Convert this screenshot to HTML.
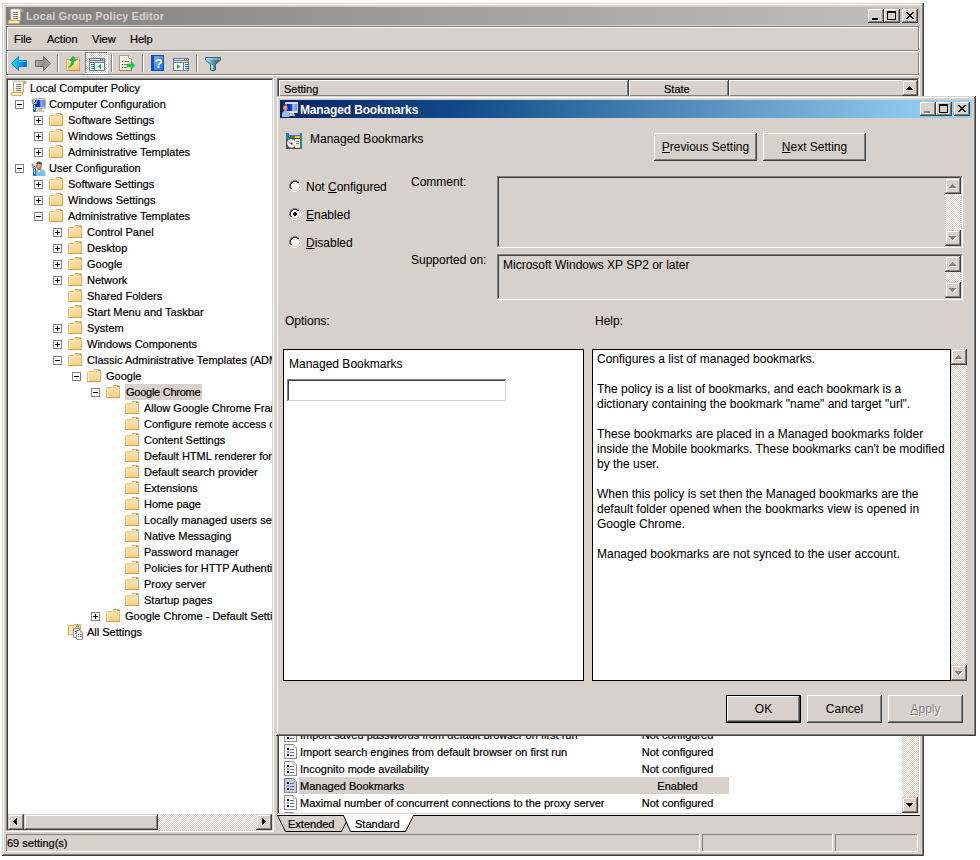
<!DOCTYPE html><html><head><meta charset="utf-8"><style>*{box-sizing:border-box}
html,body{margin:0;padding:0}
body{width:980px;height:860px;overflow:hidden;background:#fff;position:relative;font-family:"Liberation Sans",sans-serif;font-size:11px;color:#000}
.a{position:absolute}
.t{position:absolute;white-space:nowrap;line-height:15px}
.s11{margin-left:-1px;-webkit-text-stroke:0.2px currentColor}
.s12{-webkit-text-stroke:0.05px currentColor}
svg.a{overflow:visible}
u{text-decoration:underline;text-decoration-thickness:1px;text-underline-offset:1px}
</style></head><body><svg width="0" height="0" style="position:absolute"><defs><pattern id="dith" width="2" height="2" patternUnits="userSpaceOnUse"><rect width="2" height="2" fill="#d8d0ca"/><rect width="1" height="1" fill="#fff"/><rect x="1" y="1" width="1" height="1" fill="#fff"/></pattern></defs></svg>
<div class="a" style="left:2px;top:3px;width:922px;height:853px;background:#d8d0ca"></div>
<div class="a" style="left:2px;top:3px;width:922px;height:1px;background:#d8d0ca"></div>
<div class="a" style="left:2px;top:3px;width:1px;height:853px;background:#d8d0ca"></div>
<div class="a" style="left:2px;top:855px;width:922px;height:1px;background:#404040"></div>
<div class="a" style="left:923px;top:3px;width:1px;height:853px;background:#404040"></div>
<div class="a" style="left:3px;top:4px;width:920px;height:1px;background:#fff"></div>
<div class="a" style="left:3px;top:4px;width:1px;height:851px;background:#fff"></div>
<div class="a" style="left:3px;top:854px;width:920px;height:1px;background:#808080"></div>
<div class="a" style="left:922px;top:4px;width:1px;height:851px;background:#808080"></div>
<div class="a" style="left:6px;top:7px;width:914px;height:18px;background:linear-gradient(to right,#808080,#c0c0c0)"></div>
<svg class="a" style="left:8px;top:8px" width="16" height="16" viewBox="0 0 16 16"><defs><linearGradient id="gsc" x1="0" y1="0" x2="1" y2="1"><stop offset="0" stop-color="#fffef4"/><stop offset="1" stop-color="#fbe49a"/></linearGradient></defs><path d="M2.5,2 Q2.5,1 3.5,1 H13.5 L12.5,2.5 V12.5 H2.5 Z" fill="url(#gsc)" stroke="#a8aab8"/><g shape-rendering="crispEdges"><rect x="5" y="4" width="5" height="1" fill="#7c7aa8"/><rect x="5" y="6" width="5" height="1" fill="#7c7aa8"/><rect x="5" y="8" width="5" height="1" fill="#7c7aa8"/><rect x="5" y="10" width="5" height="1" fill="#7c7aa8"/></g><circle cx="14" cy="2.6" r="1.6" fill="#c8a048"/><path d="M1,12.5 H10.5 Q11.5,12.5 11.5,14 Q11.5,15.5 10.5,15.5 H1 Q0,15.5 0,14 Q0,12.5 1,12.5Z" fill="#fbe6a8" stroke="#c8a860" stroke-width="0.9"/><rect x="2" y="13.5" width="7" height="1" fill="#fff6d8"/></svg>
<div class="t " style="left:26px;top:9px;font-size:11px;font-weight:bold;color:#d8d0ca;letter-spacing:0.12px">Local Group Policy Editor</div>
<div class="a" style="left:868px;top:9px;width:16px;height:14px;background:#d8d0ca"></div>
<div class="a" style="left:868px;top:9px;width:16px;height:1px;background:#fff"></div>
<div class="a" style="left:868px;top:9px;width:1px;height:14px;background:#fff"></div>
<div class="a" style="left:868px;top:22px;width:16px;height:1px;background:#404040"></div>
<div class="a" style="left:883px;top:9px;width:1px;height:14px;background:#404040"></div>
<div class="a" style="left:869px;top:21px;width:14px;height:1px;background:#808080"></div>
<div class="a" style="left:882px;top:10px;width:1px;height:12px;background:#808080"></div>
<svg class="a" style="left:0;top:0" width="980" height="860" shape-rendering="crispEdges"><rect x="872" y="18" width="6" height="2" fill="#000"/></svg>
<div class="a" style="left:884px;top:9px;width:16px;height:14px;background:#d8d0ca"></div>
<div class="a" style="left:884px;top:9px;width:16px;height:1px;background:#fff"></div>
<div class="a" style="left:884px;top:9px;width:1px;height:14px;background:#fff"></div>
<div class="a" style="left:884px;top:22px;width:16px;height:1px;background:#404040"></div>
<div class="a" style="left:899px;top:9px;width:1px;height:14px;background:#404040"></div>
<div class="a" style="left:885px;top:21px;width:14px;height:1px;background:#808080"></div>
<div class="a" style="left:898px;top:10px;width:1px;height:12px;background:#808080"></div>
<svg class="a" style="left:0;top:0" width="980" height="860" shape-rendering="crispEdges"><rect x="887" y="11" width="9" height="2" fill="#000"/><rect x="887" y="11" width="1" height="9" fill="#000"/><rect x="895" y="11" width="1" height="9" fill="#000"/><rect x="887" y="19" width="9" height="1" fill="#000"/></svg>
<div class="a" style="left:902px;top:9px;width:16px;height:14px;background:#d8d0ca"></div>
<div class="a" style="left:902px;top:9px;width:16px;height:1px;background:#fff"></div>
<div class="a" style="left:902px;top:9px;width:1px;height:14px;background:#fff"></div>
<div class="a" style="left:902px;top:22px;width:16px;height:1px;background:#404040"></div>
<div class="a" style="left:917px;top:9px;width:1px;height:14px;background:#404040"></div>
<div class="a" style="left:903px;top:21px;width:14px;height:1px;background:#808080"></div>
<div class="a" style="left:916px;top:10px;width:1px;height:12px;background:#808080"></div>
<svg class="a" style="left:0;top:0" width="980" height="860" shape-rendering="crispEdges"><rect x="906" y="12" width="1" height="1" fill="#000"/><rect x="907" y="12" width="1" height="1" fill="#000"/><rect x="912" y="12" width="1" height="1" fill="#000"/><rect x="913" y="12" width="1" height="1" fill="#000"/><rect x="907" y="13" width="1" height="1" fill="#000"/><rect x="908" y="13" width="1" height="1" fill="#000"/><rect x="911" y="13" width="1" height="1" fill="#000"/><rect x="912" y="13" width="1" height="1" fill="#000"/><rect x="908" y="14" width="1" height="1" fill="#000"/><rect x="909" y="14" width="1" height="1" fill="#000"/><rect x="910" y="14" width="1" height="1" fill="#000"/><rect x="911" y="14" width="1" height="1" fill="#000"/><rect x="909" y="15" width="1" height="1" fill="#000"/><rect x="910" y="15" width="1" height="1" fill="#000"/><rect x="908" y="16" width="1" height="1" fill="#000"/><rect x="909" y="16" width="1" height="1" fill="#000"/><rect x="910" y="16" width="1" height="1" fill="#000"/><rect x="911" y="16" width="1" height="1" fill="#000"/><rect x="907" y="17" width="1" height="1" fill="#000"/><rect x="908" y="17" width="1" height="1" fill="#000"/><rect x="911" y="17" width="1" height="1" fill="#000"/><rect x="912" y="17" width="1" height="1" fill="#000"/><rect x="906" y="18" width="1" height="1" fill="#000"/><rect x="907" y="18" width="1" height="1" fill="#000"/><rect x="912" y="18" width="1" height="1" fill="#000"/><rect x="913" y="18" width="1" height="1" fill="#000"/></svg>
<div class="a" style="left:6px;top:26px;width:913px;height:1px;background:#808080"></div>
<div class="a" style="left:6px;top:26px;width:1px;height:49px;background:#808080"></div>
<div class="a" style="left:7px;top:27px;width:913px;height:1px;background:#fff"></div>
<div class="a" style="left:7px;top:27px;width:1px;height:49px;background:#fff"></div>
<div class="a" style="left:918px;top:26px;width:1px;height:49px;background:#808080"></div>
<div class="a" style="left:919px;top:26px;width:1px;height:50px;background:#fff"></div>
<div class="a" style="left:6px;top:50px;width:913px;height:1px;background:#808080"></div>
<div class="a" style="left:7px;top:51px;width:913px;height:1px;background:#fff"></div>
<div class="a" style="left:6px;top:74px;width:913px;height:1px;background:#808080"></div>
<div class="a" style="left:7px;top:75px;width:913px;height:1px;background:#fff"></div>
<div class="t s11" style="left:15px;top:32px;font-size:11px;color:#000;">File</div>
<div class="t s11" style="left:48px;top:32px;font-size:11px;color:#000;">Action</div>
<div class="t s11" style="left:93px;top:32px;font-size:11px;color:#000;">View</div>
<div class="t s11" style="left:131px;top:32px;font-size:11px;color:#000;">Help</div>
<svg class="a" style="left:11px;top:56px" width="17" height="15" viewBox="0 0 17 15"><defs><linearGradient id="gb" x1="0" y1="0" x2="1" y2="0.3"><stop offset="0" stop-color="#30d8ff"/><stop offset="0.5" stop-color="#08b8f0"/><stop offset="1" stop-color="#0068d0"/></linearGradient></defs><path d="M0.5,7.5 L7.5,0.5 V4.5 H15.5 V10.5 H7.5 V14.5 Z" fill="url(#gb)" stroke="#0a8ad0" stroke-linejoin="round"/><path d="M8,5.5 H15" stroke="#40d8ff" stroke-width="1"/></svg>
<svg class="a" style="left:34px;top:56px" width="17" height="15" viewBox="0 0 17 15"><defs><linearGradient id="gf" x1="0" y1="0" x2="1" y2="0.3"><stop offset="0" stop-color="#b8b8b8"/><stop offset="0.6" stop-color="#8c8c8c"/><stop offset="1" stop-color="#a8a8a8"/></linearGradient></defs><path d="M16.5,7.5 L9.5,0.5 V4.5 H1.5 V10.5 H9.5 V14.5 Z" fill="url(#gf)" stroke="#6c6c6c" stroke-linejoin="round"/></svg>
<div class="a" style="left:57px;top:54px;width:1px;height:18px;background:#808080"></div>
<div class="a" style="left:58px;top:54px;width:1px;height:18px;background:#fff"></div>
<svg class="a" style="left:66px;top:56px" width="15" height="15" viewBox="0 0 15 15"><defs><linearGradient id="gfo" x1="0" y1="0" x2="0" y2="1"><stop offset="0" stop-color="#fde8b0"/><stop offset="1" stop-color="#f6c870"/></linearGradient></defs><path d="M0.5,3.5 H7.5 V1.5 H13.5 V14.5 H0.5Z" fill="url(#gfo)" stroke="#e0a858" stroke-linejoin="round"/><path d="M1,6 H13" stroke="#fff0c8"/><rect x="1" y="6" width="1" height="8" fill="#fff4d0"/><rect x="10" y="2.5" width="2" height="1.5" fill="#40a0e8"/><rect x="0" y="14" width="14" height="1" fill="#c89040"/><path d="M2.2,11.5 Q5.5,9 6,4.5 L3.8,4.5 L7,0.3 L10.2,4.5 L8.2,4.5 Q7.8,10 2.2,11.5Z" fill="#10c838" stroke="#089828" stroke-width="0.6"/></svg>
<div class="a" style="left:85px;top:52px;width:23px;height:22px;background:#fff"></div>
<div class="a" style="left:85px;top:52px;width:22px;height:1px;background:#808080"></div>
<div class="a" style="left:85px;top:52px;width:1px;height:21px;background:#808080"></div>
<svg class="a" style="left:86px;top:53px" width="21" height="20"><rect width="21" height="20" fill="url(#dith)"/></svg>
<svg class="a" style="left:89px;top:58px" width="16" height="13" viewBox="0 0 16 13"><g shape-rendering="crispEdges"><rect x="0" y="0" width="16" height="13" fill="#6e7c90"/><rect x="1" y="1" width="14" height="1" fill="#d4deea"/><rect x="11" y="1" width="1" height="1" fill="#6e7c90"/><rect x="13" y="1" width="1" height="1" fill="#6e7c90"/><rect x="1" y="3" width="14" height="1" fill="#d4deea"/><rect x="1" y="5" width="4" height="7" fill="#fff"/><rect x="6" y="5" width="9" height="7" fill="#f6f6f6"/><rect x="2" y="6" width="3" height="1" fill="#1a7ed0"/><rect x="2" y="8" width="3" height="1" fill="#1a7ed0"/><rect x="2" y="10" width="3" height="1" fill="#1a7ed0"/></g><path d="M12,6 L8.5,8.5 L12,11Z" fill="#10c030"/></svg>
<div class="a" style="left:111px;top:54px;width:1px;height:18px;background:#808080"></div>
<div class="a" style="left:112px;top:54px;width:1px;height:18px;background:#fff"></div>
<svg class="a" style="left:119px;top:55px" width="17" height="16" viewBox="0 0 17 16"><defs><linearGradient id="gpg" x1="0" y1="0" x2="0" y2="1"><stop offset="0" stop-color="#fffdf0"/><stop offset="1" stop-color="#fff0c0"/></linearGradient></defs><path d="M0.5,0.5 H9.5 L12.5,3.5 V15.5 H0.5Z" fill="url(#gpg)" stroke="#a0a0a0"/><path d="M9.5,0.5 V3.5 H12.5" fill="#fff" stroke="#a8a8a8"/><rect x="0" y="15" width="13" height="1" fill="#808080"/><g shape-rendering="crispEdges"><rect x="3" y="6" width="1" height="1" fill="#222"/><rect x="5" y="6" width="5" height="1" fill="#7a78a8"/><rect x="3" y="9" width="1" height="1" fill="#222"/><rect x="5" y="9" width="3" height="1" fill="#7a78a8"/><rect x="3" y="12" width="1" height="1" fill="#222"/><rect x="5" y="12" width="3" height="1" fill="#7a78a8"/></g><path d="M8,9 H12 V6.5 L16,10.5 L12,14.5 V12 H8Z" fill="#18d048" stroke="#10b030" stroke-width="0.5"/></svg>
<div class="a" style="left:142px;top:54px;width:1px;height:18px;background:#808080"></div>
<div class="a" style="left:143px;top:54px;width:1px;height:18px;background:#fff"></div>
<svg class="a" style="left:151px;top:55px" width="13" height="16" viewBox="0 0 13 16"><defs><linearGradient id="ghp" x1="0" y1="0" x2="1" y2="1"><stop offset="0" stop-color="#80a8f0"/><stop offset="1" stop-color="#1870e0"/></linearGradient></defs><rect x="0" y="0" width="13" height="16" fill="#0a50c0"/><rect x="0" y="0" width="3" height="16" fill="#1850a8"/><rect x="3" y="1" width="9" height="14" fill="url(#ghp)"/><text x="7.6" y="13.2" font-family="Liberation Sans" font-weight="bold" font-size="13.5" fill="#fff" text-anchor="middle">?</text></svg>
<svg class="a" style="left:173px;top:58px" width="16" height="13" viewBox="0 0 16 13"><g shape-rendering="crispEdges"><rect x="0" y="0" width="16" height="13" fill="#6e7c90"/><rect x="1" y="1" width="14" height="1" fill="#d4deea"/><rect x="11" y="1" width="1" height="1" fill="#6e7c90"/><rect x="13" y="1" width="1" height="1" fill="#6e7c90"/><rect x="1" y="3" width="14" height="1" fill="#d4deea"/><rect x="1" y="5" width="9" height="7" fill="#f6f6f6"/><rect x="11" y="5" width="4" height="7" fill="#fff"/><rect x="12" y="6" width="3" height="1" fill="#1a7ed0"/><rect x="12" y="8" width="3" height="1" fill="#1a7ed0"/><rect x="12" y="10" width="3" height="1" fill="#1a7ed0"/></g><path d="M4,6 L7.5,8.5 L4,11Z" fill="#10c030"/></svg>
<div class="a" style="left:196px;top:54px;width:1px;height:18px;background:#808080"></div>
<div class="a" style="left:197px;top:54px;width:1px;height:18px;background:#fff"></div>
<svg class="a" style="left:205px;top:57px" width="16" height="14" viewBox="0 0 16 14"><defs><linearGradient id="gfl" x1="0" y1="0" x2="1" y2="0"><stop offset="0" stop-color="#b8e8f8"/><stop offset="0.5" stop-color="#5a8ea8"/><stop offset="1" stop-color="#2a5a70"/></linearGradient></defs><path d="M0.5,0.5 H15.5 V3 L10.5,7.5 V13 Q7.5,14.5 5.5,13 V7.5 L0.5,3Z" fill="url(#gfl)" stroke="#3a6a80" stroke-linejoin="round"/><rect x="1" y="1.5" width="14" height="1" fill="#a8e4fa"/><rect x="6.5" y="8" width="1.5" height="5" fill="#d8f4ff"/></svg>
<div class="a" style="left:6px;top:78px;width:268px;height:754px;background:#fff"></div>
<div class="a" style="left:6px;top:78px;width:268px;height:1px;background:#808080"></div>
<div class="a" style="left:6px;top:78px;width:1px;height:754px;background:#808080"></div>
<div class="a" style="left:6px;top:831px;width:268px;height:1px;background:#fff"></div>
<div class="a" style="left:273px;top:78px;width:1px;height:754px;background:#fff"></div>
<div class="a" style="left:7px;top:79px;width:266px;height:1px;background:#404040"></div>
<div class="a" style="left:7px;top:79px;width:1px;height:752px;background:#404040"></div>
<div class="a" style="left:7px;top:830px;width:266px;height:1px;background:#d8d0ca"></div>
<div class="a" style="left:272px;top:79px;width:1px;height:752px;background:#d8d0ca"></div>
<div class="a" style="left:274px;top:76px;width:3px;height:758px;background:#d8d0ca"></div>
<div class="a" style="left:8px;top:80px;width:264px;height:734px;overflow:hidden">
<svg class="a" style="left:3px;top:0px" width="16" height="16" viewBox="0 0 16 16"><defs><linearGradient id="gsc" x1="0" y1="0" x2="1" y2="1"><stop offset="0" stop-color="#fffef4"/><stop offset="1" stop-color="#fbe49a"/></linearGradient></defs><path d="M2.5,2 Q2.5,1 3.5,1 H13.5 L12.5,2.5 V12.5 H2.5 Z" fill="url(#gsc)" stroke="#a8aab8"/><g shape-rendering="crispEdges"><rect x="5" y="4" width="5" height="1" fill="#7c7aa8"/><rect x="5" y="6" width="5" height="1" fill="#7c7aa8"/><rect x="5" y="8" width="5" height="1" fill="#7c7aa8"/><rect x="5" y="10" width="5" height="1" fill="#7c7aa8"/></g><circle cx="14" cy="2.6" r="1.6" fill="#c8a048"/><path d="M1,12.5 H10.5 Q11.5,12.5 11.5,14 Q11.5,15.5 10.5,15.5 H1 Q0,15.5 0,14 Q0,12.5 1,12.5Z" fill="#fbe6a8" stroke="#c8a860" stroke-width="0.9"/><rect x="2" y="13.5" width="7" height="1" fill="#fff6d8"/></svg>
<div class="t s11" style="left:23px;top:1px;font-size:11px;color:#000;">Local Computer Policy</div>
<svg class="a" style="left:7px;top:20px" width="9" height="9" viewBox="0 0 9 9"><rect x="0.5" y="0.5" width="8" height="8" fill="#fff" stroke="#808080"/><rect x="2" y="4" width="5" height="1" fill="#000"/></svg>
<svg class="a" style="left:22px;top:16px" width="16" height="16" viewBox="0 0 16 16"><defs><linearGradient id="scr" x1="0" y1="0" x2="1" y2="0"><stop offset="0" stop-color="#0010b8"/><stop offset="0.45" stop-color="#0838e0"/><stop offset="0.6" stop-color="#90b8f8"/><stop offset="1" stop-color="#5080f0"/></linearGradient></defs><rect x="3" y="2" width="13" height="11" rx="1" fill="#d6d2c2"/><rect x="3.5" y="2.5" width="12" height="10" rx="1" fill="none" stroke="#bcb8aa"/><rect x="5" y="4" width="10" height="7" fill="url(#scr)"/><rect x="8" y="13" width="4" height="1" fill="#b8b4a8"/><rect x="6" y="14" width="8" height="2" fill="#c8c4b8"/><path d="M2.5,6 V3.5 M6.5,6 V3.5" stroke="#8a8a8a" stroke-width="1.6"/><rect x="2" y="6" width="5" height="2" fill="#9a9a9a"/><rect x="4" y="6" width="1" height="1" fill="#555"/><rect x="4" y="7" width="1" height="1" fill="#fff"/><rect x="3" y="8" width="3" height="8" rx="1" fill="#2060a8"/><rect x="4" y="9" width="1" height="5" fill="#c8f4ff"/></svg>
<div class="t s11" style="left:42px;top:17px;font-size:11px;color:#000;">Computer Configuration</div>
<svg class="a" style="left:26px;top:36px" width="9" height="9" viewBox="0 0 9 9"><rect x="0.5" y="0.5" width="8" height="8" fill="#fff" stroke="#808080"/><rect x="2" y="4" width="5" height="1" fill="#000"/><rect x="4" y="2" width="1" height="5" fill="#000"/></svg>
<svg class="a" style="left:41px;top:33px" width="14" height="13" viewBox="0 0 14 13"><defs><linearGradient id="fg" x1="0" y1="0" x2="0" y2="1"><stop offset="0" stop-color="#feecc0"/><stop offset="1" stop-color="#f6cf7e"/></linearGradient></defs><path d="M1.5,2.5 H6 L7,1.5 V0.5 H13 L13.5,1 V12.5 H0.5 V3.5 Z" fill="url(#fg)" stroke="#e3b465" stroke-width="1" stroke-linejoin="round"/><path d="M7,3 H13" stroke="#f0c878" stroke-width="1"/><rect x="1" y="4" width="1" height="8" fill="#fff4d8"/><rect x="9" y="1" width="2" height="1" fill="#fff"/><rect x="11" y="1" width="2" height="1" fill="#3a9ee0"/><rect x="0" y="12" width="14" height="1" fill="#d49c48"/></svg>
<div class="t s11" style="left:61px;top:33px;font-size:11px;color:#000;">Software Settings</div>
<svg class="a" style="left:26px;top:52px" width="9" height="9" viewBox="0 0 9 9"><rect x="0.5" y="0.5" width="8" height="8" fill="#fff" stroke="#808080"/><rect x="2" y="4" width="5" height="1" fill="#000"/><rect x="4" y="2" width="1" height="5" fill="#000"/></svg>
<svg class="a" style="left:41px;top:49px" width="14" height="13" viewBox="0 0 14 13"><defs><linearGradient id="fg" x1="0" y1="0" x2="0" y2="1"><stop offset="0" stop-color="#feecc0"/><stop offset="1" stop-color="#f6cf7e"/></linearGradient></defs><path d="M1.5,2.5 H6 L7,1.5 V0.5 H13 L13.5,1 V12.5 H0.5 V3.5 Z" fill="url(#fg)" stroke="#e3b465" stroke-width="1" stroke-linejoin="round"/><path d="M7,3 H13" stroke="#f0c878" stroke-width="1"/><rect x="1" y="4" width="1" height="8" fill="#fff4d8"/><rect x="9" y="1" width="2" height="1" fill="#fff"/><rect x="11" y="1" width="2" height="1" fill="#3a9ee0"/><rect x="0" y="12" width="14" height="1" fill="#d49c48"/></svg>
<div class="t s11" style="left:61px;top:49px;font-size:11px;color:#000;">Windows Settings</div>
<svg class="a" style="left:26px;top:68px" width="9" height="9" viewBox="0 0 9 9"><rect x="0.5" y="0.5" width="8" height="8" fill="#fff" stroke="#808080"/><rect x="2" y="4" width="5" height="1" fill="#000"/><rect x="4" y="2" width="1" height="5" fill="#000"/></svg>
<svg class="a" style="left:41px;top:65px" width="14" height="13" viewBox="0 0 14 13"><defs><linearGradient id="fg" x1="0" y1="0" x2="0" y2="1"><stop offset="0" stop-color="#feecc0"/><stop offset="1" stop-color="#f6cf7e"/></linearGradient></defs><path d="M1.5,2.5 H6 L7,1.5 V0.5 H13 L13.5,1 V12.5 H0.5 V3.5 Z" fill="url(#fg)" stroke="#e3b465" stroke-width="1" stroke-linejoin="round"/><path d="M7,3 H13" stroke="#f0c878" stroke-width="1"/><rect x="1" y="4" width="1" height="8" fill="#fff4d8"/><rect x="9" y="1" width="2" height="1" fill="#fff"/><rect x="11" y="1" width="2" height="1" fill="#3a9ee0"/><rect x="0" y="12" width="14" height="1" fill="#d49c48"/></svg>
<div class="t s11" style="left:61px;top:65px;font-size:11px;color:#000;">Administrative Templates</div>
<svg class="a" style="left:7px;top:84px" width="9" height="9" viewBox="0 0 9 9"><rect x="0.5" y="0.5" width="8" height="8" fill="#fff" stroke="#808080"/><rect x="2" y="4" width="5" height="1" fill="#000"/></svg>
<svg class="a" style="left:22px;top:80px" width="16" height="16" viewBox="0 0 16 16"><defs><radialGradient id="face" cx="0.4" cy="0.35" r="0.7"><stop offset="0" stop-color="#f8c090"/><stop offset="1" stop-color="#b05a20"/></radialGradient></defs><path d="M5.5,16 V13 Q5.5,9 9.5,9 Q15.5,9 15.5,13 V16 Z" fill="#78c4ee"/><rect x="8" y="10" width="2" height="2" fill="#e8f8ff"/><ellipse cx="9" cy="6" rx="2.7" ry="4" fill="url(#face)"/><path d="M6.2,5 Q6.2,1.4 9.2,1.4 Q12,1.4 12,5.4 L11.2,4.2 Q8.8,3.2 7,4.8Z" fill="#4a4a4a"/><path d="M2.5,6 V3.5 M6.5,6 V3.5" stroke="#8a8a8a" stroke-width="1.6"/><rect x="2" y="6" width="5" height="2" fill="#9a9a9a"/><rect x="4" y="6" width="1" height="1" fill="#555"/><rect x="4" y="7" width="1" height="1" fill="#fff"/><rect x="3" y="8" width="3" height="8" rx="1" fill="#2060a8"/><rect x="4" y="9" width="1" height="5" fill="#c8f4ff"/></svg>
<div class="t s11" style="left:42px;top:81px;font-size:11px;color:#000;">User Configuration</div>
<svg class="a" style="left:26px;top:100px" width="9" height="9" viewBox="0 0 9 9"><rect x="0.5" y="0.5" width="8" height="8" fill="#fff" stroke="#808080"/><rect x="2" y="4" width="5" height="1" fill="#000"/><rect x="4" y="2" width="1" height="5" fill="#000"/></svg>
<svg class="a" style="left:41px;top:97px" width="14" height="13" viewBox="0 0 14 13"><defs><linearGradient id="fg" x1="0" y1="0" x2="0" y2="1"><stop offset="0" stop-color="#feecc0"/><stop offset="1" stop-color="#f6cf7e"/></linearGradient></defs><path d="M1.5,2.5 H6 L7,1.5 V0.5 H13 L13.5,1 V12.5 H0.5 V3.5 Z" fill="url(#fg)" stroke="#e3b465" stroke-width="1" stroke-linejoin="round"/><path d="M7,3 H13" stroke="#f0c878" stroke-width="1"/><rect x="1" y="4" width="1" height="8" fill="#fff4d8"/><rect x="9" y="1" width="2" height="1" fill="#fff"/><rect x="11" y="1" width="2" height="1" fill="#3a9ee0"/><rect x="0" y="12" width="14" height="1" fill="#d49c48"/></svg>
<div class="t s11" style="left:61px;top:97px;font-size:11px;color:#000;">Software Settings</div>
<svg class="a" style="left:26px;top:116px" width="9" height="9" viewBox="0 0 9 9"><rect x="0.5" y="0.5" width="8" height="8" fill="#fff" stroke="#808080"/><rect x="2" y="4" width="5" height="1" fill="#000"/><rect x="4" y="2" width="1" height="5" fill="#000"/></svg>
<svg class="a" style="left:41px;top:113px" width="14" height="13" viewBox="0 0 14 13"><defs><linearGradient id="fg" x1="0" y1="0" x2="0" y2="1"><stop offset="0" stop-color="#feecc0"/><stop offset="1" stop-color="#f6cf7e"/></linearGradient></defs><path d="M1.5,2.5 H6 L7,1.5 V0.5 H13 L13.5,1 V12.5 H0.5 V3.5 Z" fill="url(#fg)" stroke="#e3b465" stroke-width="1" stroke-linejoin="round"/><path d="M7,3 H13" stroke="#f0c878" stroke-width="1"/><rect x="1" y="4" width="1" height="8" fill="#fff4d8"/><rect x="9" y="1" width="2" height="1" fill="#fff"/><rect x="11" y="1" width="2" height="1" fill="#3a9ee0"/><rect x="0" y="12" width="14" height="1" fill="#d49c48"/></svg>
<div class="t s11" style="left:61px;top:113px;font-size:11px;color:#000;">Windows Settings</div>
<svg class="a" style="left:26px;top:132px" width="9" height="9" viewBox="0 0 9 9"><rect x="0.5" y="0.5" width="8" height="8" fill="#fff" stroke="#808080"/><rect x="2" y="4" width="5" height="1" fill="#000"/></svg>
<svg class="a" style="left:41px;top:129px" width="14" height="13" viewBox="0 0 14 13"><defs><linearGradient id="fg" x1="0" y1="0" x2="0" y2="1"><stop offset="0" stop-color="#feecc0"/><stop offset="1" stop-color="#f6cf7e"/></linearGradient></defs><path d="M1.5,2.5 H6 L7,1.5 V0.5 H13 L13.5,1 V12.5 H0.5 V3.5 Z" fill="url(#fg)" stroke="#e3b465" stroke-width="1" stroke-linejoin="round"/><path d="M7,3 H13" stroke="#f0c878" stroke-width="1"/><rect x="1" y="4" width="1" height="8" fill="#fff4d8"/><rect x="9" y="1" width="2" height="1" fill="#fff"/><rect x="11" y="1" width="2" height="1" fill="#3a9ee0"/><rect x="0" y="12" width="14" height="1" fill="#d49c48"/></svg>
<div class="t s11" style="left:61px;top:129px;font-size:11px;color:#000;">Administrative Templates</div>
<svg class="a" style="left:45px;top:148px" width="9" height="9" viewBox="0 0 9 9"><rect x="0.5" y="0.5" width="8" height="8" fill="#fff" stroke="#808080"/><rect x="2" y="4" width="5" height="1" fill="#000"/><rect x="4" y="2" width="1" height="5" fill="#000"/></svg>
<svg class="a" style="left:60px;top:145px" width="14" height="13" viewBox="0 0 14 13"><defs><linearGradient id="fg" x1="0" y1="0" x2="0" y2="1"><stop offset="0" stop-color="#feecc0"/><stop offset="1" stop-color="#f6cf7e"/></linearGradient></defs><path d="M1.5,2.5 H6 L7,1.5 V0.5 H13 L13.5,1 V12.5 H0.5 V3.5 Z" fill="url(#fg)" stroke="#e3b465" stroke-width="1" stroke-linejoin="round"/><path d="M7,3 H13" stroke="#f0c878" stroke-width="1"/><rect x="1" y="4" width="1" height="8" fill="#fff4d8"/><rect x="9" y="1" width="2" height="1" fill="#fff"/><rect x="11" y="1" width="2" height="1" fill="#3a9ee0"/><rect x="0" y="12" width="14" height="1" fill="#d49c48"/></svg>
<div class="t s11" style="left:80px;top:145px;font-size:11px;color:#000;">Control Panel</div>
<svg class="a" style="left:45px;top:164px" width="9" height="9" viewBox="0 0 9 9"><rect x="0.5" y="0.5" width="8" height="8" fill="#fff" stroke="#808080"/><rect x="2" y="4" width="5" height="1" fill="#000"/><rect x="4" y="2" width="1" height="5" fill="#000"/></svg>
<svg class="a" style="left:60px;top:161px" width="14" height="13" viewBox="0 0 14 13"><defs><linearGradient id="fg" x1="0" y1="0" x2="0" y2="1"><stop offset="0" stop-color="#feecc0"/><stop offset="1" stop-color="#f6cf7e"/></linearGradient></defs><path d="M1.5,2.5 H6 L7,1.5 V0.5 H13 L13.5,1 V12.5 H0.5 V3.5 Z" fill="url(#fg)" stroke="#e3b465" stroke-width="1" stroke-linejoin="round"/><path d="M7,3 H13" stroke="#f0c878" stroke-width="1"/><rect x="1" y="4" width="1" height="8" fill="#fff4d8"/><rect x="9" y="1" width="2" height="1" fill="#fff"/><rect x="11" y="1" width="2" height="1" fill="#3a9ee0"/><rect x="0" y="12" width="14" height="1" fill="#d49c48"/></svg>
<div class="t s11" style="left:80px;top:161px;font-size:11px;color:#000;">Desktop</div>
<svg class="a" style="left:45px;top:180px" width="9" height="9" viewBox="0 0 9 9"><rect x="0.5" y="0.5" width="8" height="8" fill="#fff" stroke="#808080"/><rect x="2" y="4" width="5" height="1" fill="#000"/><rect x="4" y="2" width="1" height="5" fill="#000"/></svg>
<svg class="a" style="left:60px;top:177px" width="14" height="13" viewBox="0 0 14 13"><defs><linearGradient id="fg" x1="0" y1="0" x2="0" y2="1"><stop offset="0" stop-color="#feecc0"/><stop offset="1" stop-color="#f6cf7e"/></linearGradient></defs><path d="M1.5,2.5 H6 L7,1.5 V0.5 H13 L13.5,1 V12.5 H0.5 V3.5 Z" fill="url(#fg)" stroke="#e3b465" stroke-width="1" stroke-linejoin="round"/><path d="M7,3 H13" stroke="#f0c878" stroke-width="1"/><rect x="1" y="4" width="1" height="8" fill="#fff4d8"/><rect x="9" y="1" width="2" height="1" fill="#fff"/><rect x="11" y="1" width="2" height="1" fill="#3a9ee0"/><rect x="0" y="12" width="14" height="1" fill="#d49c48"/></svg>
<div class="t s11" style="left:80px;top:177px;font-size:11px;color:#000;">Google</div>
<svg class="a" style="left:45px;top:196px" width="9" height="9" viewBox="0 0 9 9"><rect x="0.5" y="0.5" width="8" height="8" fill="#fff" stroke="#808080"/><rect x="2" y="4" width="5" height="1" fill="#000"/><rect x="4" y="2" width="1" height="5" fill="#000"/></svg>
<svg class="a" style="left:60px;top:193px" width="14" height="13" viewBox="0 0 14 13"><defs><linearGradient id="fg" x1="0" y1="0" x2="0" y2="1"><stop offset="0" stop-color="#feecc0"/><stop offset="1" stop-color="#f6cf7e"/></linearGradient></defs><path d="M1.5,2.5 H6 L7,1.5 V0.5 H13 L13.5,1 V12.5 H0.5 V3.5 Z" fill="url(#fg)" stroke="#e3b465" stroke-width="1" stroke-linejoin="round"/><path d="M7,3 H13" stroke="#f0c878" stroke-width="1"/><rect x="1" y="4" width="1" height="8" fill="#fff4d8"/><rect x="9" y="1" width="2" height="1" fill="#fff"/><rect x="11" y="1" width="2" height="1" fill="#3a9ee0"/><rect x="0" y="12" width="14" height="1" fill="#d49c48"/></svg>
<div class="t s11" style="left:80px;top:193px;font-size:11px;color:#000;">Network</div>
<svg class="a" style="left:60px;top:209px" width="14" height="13" viewBox="0 0 14 13"><defs><linearGradient id="fg" x1="0" y1="0" x2="0" y2="1"><stop offset="0" stop-color="#feecc0"/><stop offset="1" stop-color="#f6cf7e"/></linearGradient></defs><path d="M1.5,2.5 H6 L7,1.5 V0.5 H13 L13.5,1 V12.5 H0.5 V3.5 Z" fill="url(#fg)" stroke="#e3b465" stroke-width="1" stroke-linejoin="round"/><path d="M7,3 H13" stroke="#f0c878" stroke-width="1"/><rect x="1" y="4" width="1" height="8" fill="#fff4d8"/><rect x="9" y="1" width="2" height="1" fill="#fff"/><rect x="11" y="1" width="2" height="1" fill="#3a9ee0"/><rect x="0" y="12" width="14" height="1" fill="#d49c48"/></svg>
<div class="t s11" style="left:80px;top:209px;font-size:11px;color:#000;">Shared Folders</div>
<svg class="a" style="left:60px;top:225px" width="14" height="13" viewBox="0 0 14 13"><defs><linearGradient id="fg" x1="0" y1="0" x2="0" y2="1"><stop offset="0" stop-color="#feecc0"/><stop offset="1" stop-color="#f6cf7e"/></linearGradient></defs><path d="M1.5,2.5 H6 L7,1.5 V0.5 H13 L13.5,1 V12.5 H0.5 V3.5 Z" fill="url(#fg)" stroke="#e3b465" stroke-width="1" stroke-linejoin="round"/><path d="M7,3 H13" stroke="#f0c878" stroke-width="1"/><rect x="1" y="4" width="1" height="8" fill="#fff4d8"/><rect x="9" y="1" width="2" height="1" fill="#fff"/><rect x="11" y="1" width="2" height="1" fill="#3a9ee0"/><rect x="0" y="12" width="14" height="1" fill="#d49c48"/></svg>
<div class="t s11" style="left:80px;top:225px;font-size:11px;color:#000;">Start Menu and Taskbar</div>
<svg class="a" style="left:45px;top:244px" width="9" height="9" viewBox="0 0 9 9"><rect x="0.5" y="0.5" width="8" height="8" fill="#fff" stroke="#808080"/><rect x="2" y="4" width="5" height="1" fill="#000"/><rect x="4" y="2" width="1" height="5" fill="#000"/></svg>
<svg class="a" style="left:60px;top:241px" width="14" height="13" viewBox="0 0 14 13"><defs><linearGradient id="fg" x1="0" y1="0" x2="0" y2="1"><stop offset="0" stop-color="#feecc0"/><stop offset="1" stop-color="#f6cf7e"/></linearGradient></defs><path d="M1.5,2.5 H6 L7,1.5 V0.5 H13 L13.5,1 V12.5 H0.5 V3.5 Z" fill="url(#fg)" stroke="#e3b465" stroke-width="1" stroke-linejoin="round"/><path d="M7,3 H13" stroke="#f0c878" stroke-width="1"/><rect x="1" y="4" width="1" height="8" fill="#fff4d8"/><rect x="9" y="1" width="2" height="1" fill="#fff"/><rect x="11" y="1" width="2" height="1" fill="#3a9ee0"/><rect x="0" y="12" width="14" height="1" fill="#d49c48"/></svg>
<div class="t s11" style="left:80px;top:241px;font-size:11px;color:#000;">System</div>
<svg class="a" style="left:45px;top:260px" width="9" height="9" viewBox="0 0 9 9"><rect x="0.5" y="0.5" width="8" height="8" fill="#fff" stroke="#808080"/><rect x="2" y="4" width="5" height="1" fill="#000"/><rect x="4" y="2" width="1" height="5" fill="#000"/></svg>
<svg class="a" style="left:60px;top:257px" width="14" height="13" viewBox="0 0 14 13"><defs><linearGradient id="fg" x1="0" y1="0" x2="0" y2="1"><stop offset="0" stop-color="#feecc0"/><stop offset="1" stop-color="#f6cf7e"/></linearGradient></defs><path d="M1.5,2.5 H6 L7,1.5 V0.5 H13 L13.5,1 V12.5 H0.5 V3.5 Z" fill="url(#fg)" stroke="#e3b465" stroke-width="1" stroke-linejoin="round"/><path d="M7,3 H13" stroke="#f0c878" stroke-width="1"/><rect x="1" y="4" width="1" height="8" fill="#fff4d8"/><rect x="9" y="1" width="2" height="1" fill="#fff"/><rect x="11" y="1" width="2" height="1" fill="#3a9ee0"/><rect x="0" y="12" width="14" height="1" fill="#d49c48"/></svg>
<div class="t s11" style="left:80px;top:257px;font-size:11px;color:#000;">Windows Components</div>
<svg class="a" style="left:45px;top:276px" width="9" height="9" viewBox="0 0 9 9"><rect x="0.5" y="0.5" width="8" height="8" fill="#fff" stroke="#808080"/><rect x="2" y="4" width="5" height="1" fill="#000"/></svg>
<svg class="a" style="left:60px;top:273px" width="14" height="13" viewBox="0 0 14 13"><defs><linearGradient id="fg" x1="0" y1="0" x2="0" y2="1"><stop offset="0" stop-color="#feecc0"/><stop offset="1" stop-color="#f6cf7e"/></linearGradient></defs><path d="M1.5,2.5 H6 L7,1.5 V0.5 H13 L13.5,1 V12.5 H0.5 V3.5 Z" fill="url(#fg)" stroke="#e3b465" stroke-width="1" stroke-linejoin="round"/><path d="M7,3 H13" stroke="#f0c878" stroke-width="1"/><rect x="1" y="4" width="1" height="8" fill="#fff4d8"/><rect x="9" y="1" width="2" height="1" fill="#fff"/><rect x="11" y="1" width="2" height="1" fill="#3a9ee0"/><rect x="0" y="12" width="14" height="1" fill="#d49c48"/></svg>
<div class="t s11" style="left:80px;top:273px;font-size:11px;color:#000;">Classic Administrative Templates (ADM)</div>
<svg class="a" style="left:64px;top:292px" width="9" height="9" viewBox="0 0 9 9"><rect x="0.5" y="0.5" width="8" height="8" fill="#fff" stroke="#808080"/><rect x="2" y="4" width="5" height="1" fill="#000"/></svg>
<svg class="a" style="left:79px;top:289px" width="14" height="13" viewBox="0 0 14 13"><defs><linearGradient id="fg" x1="0" y1="0" x2="0" y2="1"><stop offset="0" stop-color="#feecc0"/><stop offset="1" stop-color="#f6cf7e"/></linearGradient></defs><path d="M1.5,2.5 H6 L7,1.5 V0.5 H13 L13.5,1 V12.5 H0.5 V3.5 Z" fill="url(#fg)" stroke="#e3b465" stroke-width="1" stroke-linejoin="round"/><path d="M7,3 H13" stroke="#f0c878" stroke-width="1"/><rect x="1" y="4" width="1" height="8" fill="#fff4d8"/><rect x="9" y="1" width="2" height="1" fill="#fff"/><rect x="11" y="1" width="2" height="1" fill="#3a9ee0"/><rect x="0" y="12" width="14" height="1" fill="#d49c48"/></svg>
<div class="t s11" style="left:99px;top:289px;font-size:11px;color:#000;">Google</div>
<div class="a" style="left:117px;top:304px;width:77px;height:16px;background:#d8d0ca"></div>
<svg class="a" style="left:83px;top:308px" width="9" height="9" viewBox="0 0 9 9"><rect x="0.5" y="0.5" width="8" height="8" fill="#fff" stroke="#808080"/><rect x="2" y="4" width="5" height="1" fill="#000"/></svg>
<svg class="a" style="left:98px;top:305px" width="14" height="13" viewBox="0 0 14 13"><defs><linearGradient id="fg" x1="0" y1="0" x2="0" y2="1"><stop offset="0" stop-color="#feecc0"/><stop offset="1" stop-color="#f6cf7e"/></linearGradient></defs><path d="M1.5,2.5 H6 L7,1.5 V0.5 H13 L13.5,1 V12.5 H0.5 V3.5 Z" fill="url(#fg)" stroke="#e3b465" stroke-width="1" stroke-linejoin="round"/><path d="M7,3 H13" stroke="#f0c878" stroke-width="1"/><rect x="1" y="4" width="1" height="8" fill="#fff4d8"/><rect x="9" y="1" width="2" height="1" fill="#fff"/><rect x="11" y="1" width="2" height="1" fill="#3a9ee0"/><rect x="0" y="12" width="14" height="1" fill="#d49c48"/></svg>
<div class="t s11" style="left:119px;top:305px;font-size:11px;color:#000;letter-spacing:-0.25px">Google Chrome</div>
<svg class="a" style="left:117px;top:321px" width="14" height="13" viewBox="0 0 14 13"><defs><linearGradient id="fg" x1="0" y1="0" x2="0" y2="1"><stop offset="0" stop-color="#feecc0"/><stop offset="1" stop-color="#f6cf7e"/></linearGradient></defs><path d="M1.5,2.5 H6 L7,1.5 V0.5 H13 L13.5,1 V12.5 H0.5 V3.5 Z" fill="url(#fg)" stroke="#e3b465" stroke-width="1" stroke-linejoin="round"/><path d="M7,3 H13" stroke="#f0c878" stroke-width="1"/><rect x="1" y="4" width="1" height="8" fill="#fff4d8"/><rect x="9" y="1" width="2" height="1" fill="#fff"/><rect x="11" y="1" width="2" height="1" fill="#3a9ee0"/><rect x="0" y="12" width="14" height="1" fill="#d49c48"/></svg>
<div class="t s11" style="left:137px;top:321px;font-size:11px;color:#000;">Allow Google Chrome Frame to handle the following content types</div>
<svg class="a" style="left:117px;top:337px" width="14" height="13" viewBox="0 0 14 13"><defs><linearGradient id="fg" x1="0" y1="0" x2="0" y2="1"><stop offset="0" stop-color="#feecc0"/><stop offset="1" stop-color="#f6cf7e"/></linearGradient></defs><path d="M1.5,2.5 H6 L7,1.5 V0.5 H13 L13.5,1 V12.5 H0.5 V3.5 Z" fill="url(#fg)" stroke="#e3b465" stroke-width="1" stroke-linejoin="round"/><path d="M7,3 H13" stroke="#f0c878" stroke-width="1"/><rect x="1" y="4" width="1" height="8" fill="#fff4d8"/><rect x="9" y="1" width="2" height="1" fill="#fff"/><rect x="11" y="1" width="2" height="1" fill="#3a9ee0"/><rect x="0" y="12" width="14" height="1" fill="#d49c48"/></svg>
<div class="t s11" style="left:137px;top:337px;font-size:11px;color:#000;">Configure remote access options</div>
<svg class="a" style="left:117px;top:353px" width="14" height="13" viewBox="0 0 14 13"><defs><linearGradient id="fg" x1="0" y1="0" x2="0" y2="1"><stop offset="0" stop-color="#feecc0"/><stop offset="1" stop-color="#f6cf7e"/></linearGradient></defs><path d="M1.5,2.5 H6 L7,1.5 V0.5 H13 L13.5,1 V12.5 H0.5 V3.5 Z" fill="url(#fg)" stroke="#e3b465" stroke-width="1" stroke-linejoin="round"/><path d="M7,3 H13" stroke="#f0c878" stroke-width="1"/><rect x="1" y="4" width="1" height="8" fill="#fff4d8"/><rect x="9" y="1" width="2" height="1" fill="#fff"/><rect x="11" y="1" width="2" height="1" fill="#3a9ee0"/><rect x="0" y="12" width="14" height="1" fill="#d49c48"/></svg>
<div class="t s11" style="left:137px;top:353px;font-size:11px;color:#000;">Content Settings</div>
<svg class="a" style="left:117px;top:369px" width="14" height="13" viewBox="0 0 14 13"><defs><linearGradient id="fg" x1="0" y1="0" x2="0" y2="1"><stop offset="0" stop-color="#feecc0"/><stop offset="1" stop-color="#f6cf7e"/></linearGradient></defs><path d="M1.5,2.5 H6 L7,1.5 V0.5 H13 L13.5,1 V12.5 H0.5 V3.5 Z" fill="url(#fg)" stroke="#e3b465" stroke-width="1" stroke-linejoin="round"/><path d="M7,3 H13" stroke="#f0c878" stroke-width="1"/><rect x="1" y="4" width="1" height="8" fill="#fff4d8"/><rect x="9" y="1" width="2" height="1" fill="#fff"/><rect x="11" y="1" width="2" height="1" fill="#3a9ee0"/><rect x="0" y="12" width="14" height="1" fill="#d49c48"/></svg>
<div class="t s11" style="left:137px;top:369px;font-size:11px;color:#000;">Default HTML renderer for Google Chrome Frame</div>
<svg class="a" style="left:117px;top:385px" width="14" height="13" viewBox="0 0 14 13"><defs><linearGradient id="fg" x1="0" y1="0" x2="0" y2="1"><stop offset="0" stop-color="#feecc0"/><stop offset="1" stop-color="#f6cf7e"/></linearGradient></defs><path d="M1.5,2.5 H6 L7,1.5 V0.5 H13 L13.5,1 V12.5 H0.5 V3.5 Z" fill="url(#fg)" stroke="#e3b465" stroke-width="1" stroke-linejoin="round"/><path d="M7,3 H13" stroke="#f0c878" stroke-width="1"/><rect x="1" y="4" width="1" height="8" fill="#fff4d8"/><rect x="9" y="1" width="2" height="1" fill="#fff"/><rect x="11" y="1" width="2" height="1" fill="#3a9ee0"/><rect x="0" y="12" width="14" height="1" fill="#d49c48"/></svg>
<div class="t s11" style="left:137px;top:385px;font-size:11px;color:#000;">Default search provider</div>
<svg class="a" style="left:117px;top:401px" width="14" height="13" viewBox="0 0 14 13"><defs><linearGradient id="fg" x1="0" y1="0" x2="0" y2="1"><stop offset="0" stop-color="#feecc0"/><stop offset="1" stop-color="#f6cf7e"/></linearGradient></defs><path d="M1.5,2.5 H6 L7,1.5 V0.5 H13 L13.5,1 V12.5 H0.5 V3.5 Z" fill="url(#fg)" stroke="#e3b465" stroke-width="1" stroke-linejoin="round"/><path d="M7,3 H13" stroke="#f0c878" stroke-width="1"/><rect x="1" y="4" width="1" height="8" fill="#fff4d8"/><rect x="9" y="1" width="2" height="1" fill="#fff"/><rect x="11" y="1" width="2" height="1" fill="#3a9ee0"/><rect x="0" y="12" width="14" height="1" fill="#d49c48"/></svg>
<div class="t s11" style="left:137px;top:401px;font-size:11px;color:#000;">Extensions</div>
<svg class="a" style="left:117px;top:417px" width="14" height="13" viewBox="0 0 14 13"><defs><linearGradient id="fg" x1="0" y1="0" x2="0" y2="1"><stop offset="0" stop-color="#feecc0"/><stop offset="1" stop-color="#f6cf7e"/></linearGradient></defs><path d="M1.5,2.5 H6 L7,1.5 V0.5 H13 L13.5,1 V12.5 H0.5 V3.5 Z" fill="url(#fg)" stroke="#e3b465" stroke-width="1" stroke-linejoin="round"/><path d="M7,3 H13" stroke="#f0c878" stroke-width="1"/><rect x="1" y="4" width="1" height="8" fill="#fff4d8"/><rect x="9" y="1" width="2" height="1" fill="#fff"/><rect x="11" y="1" width="2" height="1" fill="#3a9ee0"/><rect x="0" y="12" width="14" height="1" fill="#d49c48"/></svg>
<div class="t s11" style="left:137px;top:417px;font-size:11px;color:#000;">Home page</div>
<svg class="a" style="left:117px;top:433px" width="14" height="13" viewBox="0 0 14 13"><defs><linearGradient id="fg" x1="0" y1="0" x2="0" y2="1"><stop offset="0" stop-color="#feecc0"/><stop offset="1" stop-color="#f6cf7e"/></linearGradient></defs><path d="M1.5,2.5 H6 L7,1.5 V0.5 H13 L13.5,1 V12.5 H0.5 V3.5 Z" fill="url(#fg)" stroke="#e3b465" stroke-width="1" stroke-linejoin="round"/><path d="M7,3 H13" stroke="#f0c878" stroke-width="1"/><rect x="1" y="4" width="1" height="8" fill="#fff4d8"/><rect x="9" y="1" width="2" height="1" fill="#fff"/><rect x="11" y="1" width="2" height="1" fill="#3a9ee0"/><rect x="0" y="12" width="14" height="1" fill="#d49c48"/></svg>
<div class="t s11" style="left:137px;top:433px;font-size:11px;color:#000;">Locally managed users settings</div>
<svg class="a" style="left:117px;top:449px" width="14" height="13" viewBox="0 0 14 13"><defs><linearGradient id="fg" x1="0" y1="0" x2="0" y2="1"><stop offset="0" stop-color="#feecc0"/><stop offset="1" stop-color="#f6cf7e"/></linearGradient></defs><path d="M1.5,2.5 H6 L7,1.5 V0.5 H13 L13.5,1 V12.5 H0.5 V3.5 Z" fill="url(#fg)" stroke="#e3b465" stroke-width="1" stroke-linejoin="round"/><path d="M7,3 H13" stroke="#f0c878" stroke-width="1"/><rect x="1" y="4" width="1" height="8" fill="#fff4d8"/><rect x="9" y="1" width="2" height="1" fill="#fff"/><rect x="11" y="1" width="2" height="1" fill="#3a9ee0"/><rect x="0" y="12" width="14" height="1" fill="#d49c48"/></svg>
<div class="t s11" style="left:137px;top:449px;font-size:11px;color:#000;">Native Messaging</div>
<svg class="a" style="left:117px;top:465px" width="14" height="13" viewBox="0 0 14 13"><defs><linearGradient id="fg" x1="0" y1="0" x2="0" y2="1"><stop offset="0" stop-color="#feecc0"/><stop offset="1" stop-color="#f6cf7e"/></linearGradient></defs><path d="M1.5,2.5 H6 L7,1.5 V0.5 H13 L13.5,1 V12.5 H0.5 V3.5 Z" fill="url(#fg)" stroke="#e3b465" stroke-width="1" stroke-linejoin="round"/><path d="M7,3 H13" stroke="#f0c878" stroke-width="1"/><rect x="1" y="4" width="1" height="8" fill="#fff4d8"/><rect x="9" y="1" width="2" height="1" fill="#fff"/><rect x="11" y="1" width="2" height="1" fill="#3a9ee0"/><rect x="0" y="12" width="14" height="1" fill="#d49c48"/></svg>
<div class="t s11" style="left:137px;top:465px;font-size:11px;color:#000;">Password manager</div>
<svg class="a" style="left:117px;top:481px" width="14" height="13" viewBox="0 0 14 13"><defs><linearGradient id="fg" x1="0" y1="0" x2="0" y2="1"><stop offset="0" stop-color="#feecc0"/><stop offset="1" stop-color="#f6cf7e"/></linearGradient></defs><path d="M1.5,2.5 H6 L7,1.5 V0.5 H13 L13.5,1 V12.5 H0.5 V3.5 Z" fill="url(#fg)" stroke="#e3b465" stroke-width="1" stroke-linejoin="round"/><path d="M7,3 H13" stroke="#f0c878" stroke-width="1"/><rect x="1" y="4" width="1" height="8" fill="#fff4d8"/><rect x="9" y="1" width="2" height="1" fill="#fff"/><rect x="11" y="1" width="2" height="1" fill="#3a9ee0"/><rect x="0" y="12" width="14" height="1" fill="#d49c48"/></svg>
<div class="t s11" style="left:137px;top:481px;font-size:11px;color:#000;">Policies for HTTP Authentication</div>
<svg class="a" style="left:117px;top:497px" width="14" height="13" viewBox="0 0 14 13"><defs><linearGradient id="fg" x1="0" y1="0" x2="0" y2="1"><stop offset="0" stop-color="#feecc0"/><stop offset="1" stop-color="#f6cf7e"/></linearGradient></defs><path d="M1.5,2.5 H6 L7,1.5 V0.5 H13 L13.5,1 V12.5 H0.5 V3.5 Z" fill="url(#fg)" stroke="#e3b465" stroke-width="1" stroke-linejoin="round"/><path d="M7,3 H13" stroke="#f0c878" stroke-width="1"/><rect x="1" y="4" width="1" height="8" fill="#fff4d8"/><rect x="9" y="1" width="2" height="1" fill="#fff"/><rect x="11" y="1" width="2" height="1" fill="#3a9ee0"/><rect x="0" y="12" width="14" height="1" fill="#d49c48"/></svg>
<div class="t s11" style="left:137px;top:497px;font-size:11px;color:#000;">Proxy server</div>
<svg class="a" style="left:117px;top:513px" width="14" height="13" viewBox="0 0 14 13"><defs><linearGradient id="fg" x1="0" y1="0" x2="0" y2="1"><stop offset="0" stop-color="#feecc0"/><stop offset="1" stop-color="#f6cf7e"/></linearGradient></defs><path d="M1.5,2.5 H6 L7,1.5 V0.5 H13 L13.5,1 V12.5 H0.5 V3.5 Z" fill="url(#fg)" stroke="#e3b465" stroke-width="1" stroke-linejoin="round"/><path d="M7,3 H13" stroke="#f0c878" stroke-width="1"/><rect x="1" y="4" width="1" height="8" fill="#fff4d8"/><rect x="9" y="1" width="2" height="1" fill="#fff"/><rect x="11" y="1" width="2" height="1" fill="#3a9ee0"/><rect x="0" y="12" width="14" height="1" fill="#d49c48"/></svg>
<div class="t s11" style="left:137px;top:513px;font-size:11px;color:#000;">Startup pages</div>
<svg class="a" style="left:83px;top:532px" width="9" height="9" viewBox="0 0 9 9"><rect x="0.5" y="0.5" width="8" height="8" fill="#fff" stroke="#808080"/><rect x="2" y="4" width="5" height="1" fill="#000"/><rect x="4" y="2" width="1" height="5" fill="#000"/></svg>
<svg class="a" style="left:98px;top:529px" width="14" height="13" viewBox="0 0 14 13"><defs><linearGradient id="fg" x1="0" y1="0" x2="0" y2="1"><stop offset="0" stop-color="#feecc0"/><stop offset="1" stop-color="#f6cf7e"/></linearGradient></defs><path d="M1.5,2.5 H6 L7,1.5 V0.5 H13 L13.5,1 V12.5 H0.5 V3.5 Z" fill="url(#fg)" stroke="#e3b465" stroke-width="1" stroke-linejoin="round"/><path d="M7,3 H13" stroke="#f0c878" stroke-width="1"/><rect x="1" y="4" width="1" height="8" fill="#fff4d8"/><rect x="9" y="1" width="2" height="1" fill="#fff"/><rect x="11" y="1" width="2" height="1" fill="#3a9ee0"/><rect x="0" y="12" width="14" height="1" fill="#d49c48"/></svg>
<div class="t s11" style="left:118px;top:529px;font-size:11px;color:#000;">Google Chrome - Default Settings (users can override)</div>
<svg class="a" style="left:57px;top:543px" width="18" height="17" viewBox="0 0 18 17"><defs><linearGradient id="gas" x1="0" y1="0" x2="1" y2="0"><stop offset="0" stop-color="#fff0b8"/><stop offset="1" stop-color="#f6cf7e"/></linearGradient></defs><path d="M3.5,2.5 H9 V1.5 H15.5 V11.5 H3.5Z" fill="url(#gas)" stroke="#e0ac5c" stroke-linejoin="round"/><rect x="9" y="2" width="6" height="3" fill="#f8c878"/><rect x="11" y="2.5" width="3" height="1.5" fill="#3a9ee8"/><rect x="10" y="2.5" width="1" height="1.5" fill="#fff"/><rect x="8.5" y="5.5" width="6" height="9" fill="#fff" stroke="#959595"/><rect x="10" y="8" width="1" height="1" fill="#333"/><rect x="10" y="10" width="1" height="1" fill="#8a88b8"/><path d="M11.5,7.5 H15.5 L17.5,9.5 V16.5 H11.5Z" fill="#fff" stroke="#959595"/><path d="M15.5,7.5 V9.5 H17.5" fill="none" stroke="#b8b8b8"/><rect x="13" y="11" width="1" height="1" fill="#333"/><rect x="15" y="11" width="2" height="1" fill="#6a68a0"/><rect x="13" y="13" width="1" height="1" fill="#8a88b8"/><rect x="15" y="13" width="2" height="1" fill="#6a68a0"/></svg>
<div class="t s11" style="left:80px;top:545px;font-size:11px;color:#000;">All Settings</div>
</div>
<div class="a" style="left:8px;top:814px;width:16px;height:16px;background:#d8d0ca"></div>
<div class="a" style="left:8px;top:814px;width:16px;height:1px;background:#d8d0ca"></div>
<div class="a" style="left:8px;top:814px;width:1px;height:16px;background:#d8d0ca"></div>
<div class="a" style="left:8px;top:829px;width:16px;height:1px;background:#404040"></div>
<div class="a" style="left:23px;top:814px;width:1px;height:16px;background:#404040"></div>
<div class="a" style="left:9px;top:815px;width:14px;height:1px;background:#fff"></div>
<div class="a" style="left:9px;top:815px;width:1px;height:14px;background:#fff"></div>
<div class="a" style="left:9px;top:828px;width:14px;height:1px;background:#808080"></div>
<div class="a" style="left:22px;top:815px;width:1px;height:14px;background:#808080"></div>
<svg class="a" style="left:0;top:0" width="980" height="860" shape-rendering="crispEdges"><rect x="13" y="821" width="1" height="1" fill="#000"/><rect x="14" y="820" width="1" height="3" fill="#000"/><rect x="15" y="819" width="1" height="5" fill="#000"/><rect x="16" y="818" width="1" height="7" fill="#000"/></svg>
<div class="a" style="left:24px;top:814px;width:134px;height:16px;background:#d8d0ca"></div>
<div class="a" style="left:24px;top:814px;width:134px;height:1px;background:#d8d0ca"></div>
<div class="a" style="left:24px;top:814px;width:1px;height:16px;background:#d8d0ca"></div>
<div class="a" style="left:24px;top:829px;width:134px;height:1px;background:#404040"></div>
<div class="a" style="left:157px;top:814px;width:1px;height:16px;background:#404040"></div>
<div class="a" style="left:25px;top:828px;width:132px;height:1px;background:#808080"></div>
<div class="a" style="left:156px;top:815px;width:1px;height:14px;background:#808080"></div>
<div class="a" style="left:25px;top:815px;width:132px;height:1px;background:#fff"></div>
<div class="a" style="left:25px;top:815px;width:1px;height:13px;background:#fff"></div>
<svg class="a" style="left:158px;top:814px" width="98" height="16"><rect width="98" height="16" fill="url(#dith)"/></svg>
<div class="a" style="left:256px;top:814px;width:16px;height:16px;background:#d8d0ca"></div>
<div class="a" style="left:256px;top:814px;width:16px;height:1px;background:#d8d0ca"></div>
<div class="a" style="left:256px;top:814px;width:1px;height:16px;background:#d8d0ca"></div>
<div class="a" style="left:256px;top:829px;width:16px;height:1px;background:#404040"></div>
<div class="a" style="left:271px;top:814px;width:1px;height:16px;background:#404040"></div>
<div class="a" style="left:257px;top:815px;width:14px;height:1px;background:#fff"></div>
<div class="a" style="left:257px;top:815px;width:1px;height:14px;background:#fff"></div>
<div class="a" style="left:257px;top:828px;width:14px;height:1px;background:#808080"></div>
<div class="a" style="left:270px;top:815px;width:1px;height:14px;background:#808080"></div>
<svg class="a" style="left:0;top:0" width="980" height="860" shape-rendering="crispEdges"><rect x="265" y="821" width="1" height="1" fill="#000"/><rect x="264" y="820" width="1" height="3" fill="#000"/><rect x="263" y="819" width="1" height="5" fill="#000"/><rect x="262" y="818" width="1" height="7" fill="#000"/></svg>
<div class="a" style="left:277px;top:78px;width:643px;height:737px;background:#fff"></div>
<div class="a" style="left:277px;top:78px;width:643px;height:1px;background:#808080"></div>
<div class="a" style="left:277px;top:78px;width:1px;height:737px;background:#808080"></div>
<div class="a" style="left:277px;top:814px;width:643px;height:1px;background:#fff"></div>
<div class="a" style="left:919px;top:78px;width:1px;height:737px;background:#fff"></div>
<div class="a" style="left:278px;top:79px;width:641px;height:1px;background:#404040"></div>
<div class="a" style="left:278px;top:79px;width:1px;height:735px;background:#404040"></div>
<div class="a" style="left:278px;top:813px;width:641px;height:1px;background:#d8d0ca"></div>
<div class="a" style="left:918px;top:79px;width:1px;height:735px;background:#d8d0ca"></div>
<div class="a" style="left:279px;top:80px;width:350px;height:17px;background:#d8d0ca"></div>
<div class="a" style="left:279px;top:80px;width:350px;height:1px;background:#fff"></div>
<div class="a" style="left:279px;top:80px;width:1px;height:17px;background:#fff"></div>
<div class="a" style="left:279px;top:96px;width:350px;height:1px;background:#404040"></div>
<div class="a" style="left:628px;top:80px;width:1px;height:17px;background:#404040"></div>
<div class="a" style="left:280px;top:95px;width:348px;height:1px;background:#808080"></div>
<div class="a" style="left:627px;top:81px;width:1px;height:15px;background:#808080"></div>
<div class="a" style="left:629px;top:80px;width:100px;height:17px;background:#d8d0ca"></div>
<div class="a" style="left:629px;top:80px;width:100px;height:1px;background:#fff"></div>
<div class="a" style="left:629px;top:80px;width:1px;height:17px;background:#fff"></div>
<div class="a" style="left:629px;top:96px;width:100px;height:1px;background:#404040"></div>
<div class="a" style="left:728px;top:80px;width:1px;height:17px;background:#404040"></div>
<div class="a" style="left:630px;top:95px;width:98px;height:1px;background:#808080"></div>
<div class="a" style="left:727px;top:81px;width:1px;height:15px;background:#808080"></div>
<div class="a" style="left:729px;top:80px;width:173px;height:17px;background:#d8d0ca"></div>
<div class="a" style="left:729px;top:80px;width:173px;height:1px;background:#fff"></div>
<div class="a" style="left:729px;top:80px;width:1px;height:17px;background:#fff"></div>
<div class="a" style="left:729px;top:96px;width:173px;height:1px;background:#404040"></div>
<div class="a" style="left:901px;top:80px;width:1px;height:17px;background:#404040"></div>
<div class="a" style="left:730px;top:95px;width:171px;height:1px;background:#808080"></div>
<div class="a" style="left:900px;top:81px;width:1px;height:15px;background:#808080"></div>
<div class="a" style="left:900px;top:81px;width:2px;height:14px;background:#d8d0ca"></div>
<div class="a" style="left:900px;top:80px;width:2px;height:1px;background:#fff"></div>
<div class="a" style="left:900px;top:95px;width:2px;height:1px;background:#808080"></div>
<div class="t s11" style="left:285px;top:82px;font-size:11px;color:#000;">Setting</div>
<div class="t s11" style="left:665px;top:82px;font-size:11px;color:#000;">State</div>
<div class="a" style="left:902px;top:80px;width:16px;height:16px;background:#d8d0ca"></div>
<div class="a" style="left:902px;top:80px;width:16px;height:1px;background:#d8d0ca"></div>
<div class="a" style="left:902px;top:80px;width:1px;height:16px;background:#d8d0ca"></div>
<div class="a" style="left:902px;top:95px;width:16px;height:1px;background:#404040"></div>
<div class="a" style="left:917px;top:80px;width:1px;height:16px;background:#404040"></div>
<div class="a" style="left:903px;top:81px;width:14px;height:1px;background:#fff"></div>
<div class="a" style="left:903px;top:81px;width:1px;height:14px;background:#fff"></div>
<div class="a" style="left:903px;top:94px;width:14px;height:1px;background:#808080"></div>
<div class="a" style="left:916px;top:81px;width:1px;height:14px;background:#808080"></div>
<svg class="a" style="left:0;top:0" width="980" height="860" shape-rendering="crispEdges"><rect x="909" y="86" width="1" height="1" fill="#000"/><rect x="908" y="87" width="3" height="1" fill="#000"/><rect x="907" y="88" width="5" height="1" fill="#000"/><rect x="906" y="89" width="7" height="1" fill="#000"/></svg>
<svg class="a" style="left:902px;top:96px" width="16" height="701"><rect width="16" height="701" fill="url(#dith)"/></svg>
<div class="a" style="left:902px;top:797px;width:16px;height:16px;background:#d8d0ca"></div>
<div class="a" style="left:902px;top:797px;width:16px;height:1px;background:#d8d0ca"></div>
<div class="a" style="left:902px;top:797px;width:1px;height:16px;background:#d8d0ca"></div>
<div class="a" style="left:902px;top:812px;width:16px;height:1px;background:#404040"></div>
<div class="a" style="left:917px;top:797px;width:1px;height:16px;background:#404040"></div>
<div class="a" style="left:903px;top:798px;width:14px;height:1px;background:#fff"></div>
<div class="a" style="left:903px;top:798px;width:1px;height:14px;background:#fff"></div>
<div class="a" style="left:903px;top:811px;width:14px;height:1px;background:#808080"></div>
<div class="a" style="left:916px;top:798px;width:1px;height:14px;background:#808080"></div>
<svg class="a" style="left:0;top:0" width="980" height="860" shape-rendering="crispEdges"><rect x="909" y="806" width="1" height="1" fill="#000"/><rect x="908" y="805" width="3" height="1" fill="#000"/><rect x="907" y="804" width="5" height="1" fill="#000"/><rect x="906" y="803" width="7" height="1" fill="#000"/></svg>
<div class="a" style="left:279px;top:96px;width:623px;height:717px;overflow:hidden">
<svg class="a" style="left:5px;top:631px" width="14" height="16" viewBox="0 0 14 16"><path d="M0.5,0.5 H9.5 L12.5,3.5 V14.5 H0.5 Z" fill="#fff" stroke="#8c8c8c"/><path d="M9.5,0.5 V3.5 H12.5" fill="#fff" stroke="#b8b8b8"/><rect x="0" y="14" width="13" height="1" fill="#909090"/><g shape-rendering="crispEdges"><rect x="3" y="4" width="2" height="2" fill="#000"/><rect x="6" y="5" width="4" height="1" fill="#6a6a9a"/><rect x="3" y="7" width="2" height="2" fill="#9a94c0"/><rect x="6" y="8" width="4" height="1" fill="#6a6a9a"/><rect x="3" y="10" width="2" height="2" fill="#000"/><rect x="6" y="11" width="4" height="1" fill="#6a6a9a"/></g></svg>
<div class="t s11" style="left:22px;top:632px;font-size:11px;color:#000;">Import saved passwords from default browser on first run</div>
<div class="t s11" style="left:350px;top:632px;width:99px;text-align:center;font-size:11px">Not configured</div>
<svg class="a" style="left:5px;top:648px" width="14" height="16" viewBox="0 0 14 16"><path d="M0.5,0.5 H9.5 L12.5,3.5 V14.5 H0.5 Z" fill="#fff" stroke="#8c8c8c"/><path d="M9.5,0.5 V3.5 H12.5" fill="#fff" stroke="#b8b8b8"/><rect x="0" y="14" width="13" height="1" fill="#909090"/><g shape-rendering="crispEdges"><rect x="3" y="4" width="2" height="2" fill="#000"/><rect x="6" y="5" width="4" height="1" fill="#6a6a9a"/><rect x="3" y="7" width="2" height="2" fill="#9a94c0"/><rect x="6" y="8" width="4" height="1" fill="#6a6a9a"/><rect x="3" y="10" width="2" height="2" fill="#000"/><rect x="6" y="11" width="4" height="1" fill="#6a6a9a"/></g></svg>
<div class="t s11" style="left:22px;top:649px;font-size:11px;color:#000;">Import search engines from default browser on first run</div>
<div class="t s11" style="left:350px;top:649px;width:99px;text-align:center;font-size:11px">Not configured</div>
<svg class="a" style="left:5px;top:665px" width="14" height="16" viewBox="0 0 14 16"><path d="M0.5,0.5 H9.5 L12.5,3.5 V14.5 H0.5 Z" fill="#fff" stroke="#8c8c8c"/><path d="M9.5,0.5 V3.5 H12.5" fill="#fff" stroke="#b8b8b8"/><rect x="0" y="14" width="13" height="1" fill="#909090"/><g shape-rendering="crispEdges"><rect x="3" y="4" width="2" height="2" fill="#000"/><rect x="6" y="5" width="4" height="1" fill="#6a6a9a"/><rect x="3" y="7" width="2" height="2" fill="#9a94c0"/><rect x="6" y="8" width="4" height="1" fill="#6a6a9a"/><rect x="3" y="10" width="2" height="2" fill="#000"/><rect x="6" y="11" width="4" height="1" fill="#6a6a9a"/></g></svg>
<div class="t s11" style="left:22px;top:666px;font-size:11px;color:#000;">Incognito mode availability</div>
<div class="t s11" style="left:350px;top:666px;width:99px;text-align:center;font-size:11px">Not configured</div>
<div class="a" style="left:20px;top:681px;width:430px;height:17px;background:#d8d0ca"></div>
<svg class="a" style="left:5px;top:682px" width="14" height="16" viewBox="0 0 14 16"><path d="M0.5,0.5 H9.5 L12.5,3.5 V14.5 H0.5 Z" fill="#c4cde0" stroke="#6a7488"/><path d="M9.5,0.5 V3.5 H12.5" fill="#fff" stroke="#b8b8b8"/><rect x="0" y="14" width="13" height="1" fill="#909090"/><g shape-rendering="crispEdges"><rect x="3" y="4" width="2" height="2" fill="#000"/><rect x="6" y="5" width="4" height="1" fill="#6a6a9a"/><rect x="3" y="7" width="2" height="2" fill="#9a94c0"/><rect x="6" y="8" width="4" height="1" fill="#6a6a9a"/><rect x="3" y="10" width="2" height="2" fill="#000"/><rect x="6" y="11" width="4" height="1" fill="#6a6a9a"/></g></svg>
<div class="t s11" style="left:22px;top:683px;font-size:11px;color:#000;">Managed Bookmarks</div>
<div class="t s11" style="left:350px;top:683px;width:99px;text-align:center;font-size:11px">Enabled</div>
<svg class="a" style="left:5px;top:699px" width="14" height="16" viewBox="0 0 14 16"><path d="M0.5,0.5 H9.5 L12.5,3.5 V14.5 H0.5 Z" fill="#fff" stroke="#8c8c8c"/><path d="M9.5,0.5 V3.5 H12.5" fill="#fff" stroke="#b8b8b8"/><rect x="0" y="14" width="13" height="1" fill="#909090"/><g shape-rendering="crispEdges"><rect x="3" y="4" width="2" height="2" fill="#000"/><rect x="6" y="5" width="4" height="1" fill="#6a6a9a"/><rect x="3" y="7" width="2" height="2" fill="#9a94c0"/><rect x="6" y="8" width="4" height="1" fill="#6a6a9a"/><rect x="3" y="10" width="2" height="2" fill="#000"/><rect x="6" y="11" width="4" height="1" fill="#6a6a9a"/></g></svg>
<div class="t s11" style="left:22px;top:700px;font-size:11px;color:#000;">Maximal number of concurrent connections to the proxy server</div>
<div class="t s11" style="left:350px;top:700px;width:99px;text-align:center;font-size:11px">Not configured</div>
<svg class="a" style="left:5px;top:716px" width="14" height="16" viewBox="0 0 14 16"><path d="M0.5,0.5 H9.5 L12.5,3.5 V14.5 H0.5 Z" fill="#fff" stroke="#8c8c8c"/><path d="M9.5,0.5 V3.5 H12.5" fill="#fff" stroke="#b8b8b8"/><rect x="0" y="14" width="13" height="1" fill="#909090"/><g shape-rendering="crispEdges"><rect x="3" y="4" width="2" height="2" fill="#000"/><rect x="6" y="5" width="4" height="1" fill="#6a6a9a"/><rect x="3" y="7" width="2" height="2" fill="#9a94c0"/><rect x="6" y="8" width="4" height="1" fill="#6a6a9a"/><rect x="3" y="10" width="2" height="2" fill="#000"/><rect x="6" y="11" width="4" height="1" fill="#6a6a9a"/></g></svg>
<div class="t s11" style="left:22px;top:717px;font-size:11px;color:#000;">Metrics reporting</div>
<div class="t s11" style="left:350px;top:717px;width:99px;text-align:center;font-size:11px">Not configured</div>
</div>
<div class="a" style="left:277px;top:815px;width:643px;height:18px;background:#d8d0ca"></div>
<div class="a" style="left:277px;top:815px;width:643px;height:1px;background:#000"></div>
<svg class="a" style="left:270px;top:810px" width="160" height="25" viewBox="0 0 160 25"><path d="M7.5,5.5 L15.5,21.5 H71.5 L79.5,5.5Z" fill="#d8d0ca" stroke="#000"/><path d="M73.5,5.5 L80.5,21.5 H135.5 L143.5,5.5" fill="#fff" stroke="#000"/><rect x="74" y="4" width="69" height="2" fill="#fff"/></svg>
<div class="t s11" style="left:289px;top:817px;font-size:11px;color:#000;">Extended</div>
<div class="t s11" style="left:356px;top:817px;font-size:11px;color:#000;">Standard</div>
<div class="a" style="left:6px;top:834px;width:694px;height:1px;background:#808080"></div>
<div class="a" style="left:6px;top:834px;width:1px;height:18px;background:#808080"></div>
<div class="a" style="left:6px;top:851px;width:694px;height:1px;background:#fff"></div>
<div class="a" style="left:699px;top:834px;width:1px;height:18px;background:#fff"></div>
<div class="a" style="left:702px;top:834px;width:131px;height:1px;background:#808080"></div>
<div class="a" style="left:702px;top:834px;width:1px;height:18px;background:#808080"></div>
<div class="a" style="left:702px;top:851px;width:131px;height:1px;background:#fff"></div>
<div class="a" style="left:832px;top:834px;width:1px;height:18px;background:#fff"></div>
<div class="a" style="left:835px;top:834px;width:83px;height:1px;background:#808080"></div>
<div class="a" style="left:835px;top:834px;width:1px;height:18px;background:#808080"></div>
<div class="a" style="left:835px;top:851px;width:83px;height:1px;background:#fff"></div>
<div class="a" style="left:917px;top:834px;width:1px;height:18px;background:#fff"></div>
<div class="t s11" style="left:8px;top:836px;font-size:11px;color:#000;">69 setting(s)</div>
<div class="a" style="left:276px;top:96px;width:700px;height:640px;background:#d8d0ca"></div>
<div class="a" style="left:276px;top:96px;width:700px;height:1px;background:#d8d0ca"></div>
<div class="a" style="left:276px;top:96px;width:1px;height:640px;background:#d8d0ca"></div>
<div class="a" style="left:276px;top:735px;width:700px;height:1px;background:#404040"></div>
<div class="a" style="left:975px;top:96px;width:1px;height:640px;background:#404040"></div>
<div class="a" style="left:277px;top:97px;width:698px;height:1px;background:#fff"></div>
<div class="a" style="left:277px;top:97px;width:1px;height:638px;background:#fff"></div>
<div class="a" style="left:277px;top:734px;width:698px;height:1px;background:#808080"></div>
<div class="a" style="left:974px;top:97px;width:1px;height:638px;background:#808080"></div>
<div class="a" style="left:280px;top:100px;width:692px;height:18px;background:linear-gradient(to right,#0a246a 0%,#104a88 26%,#2a6aa0 40.5%,#629ac8 66.5%,#8fcbee 92.5%,#98d0f2 100%)"></div>
<svg class="a" style="left:282px;top:101px" width="16" height="16" viewBox="0 0 16 16"><defs><linearGradient id="dscr" x1="0" y1="0" x2="1" y2="0"><stop offset="0" stop-color="#0018c8"/><stop offset="0.45" stop-color="#1040f0"/><stop offset="0.6" stop-color="#a8c8fa"/><stop offset="1" stop-color="#6090f0"/></linearGradient><radialGradient id="dface" cx="0.4" cy="0.4" r="0.7"><stop offset="0" stop-color="#f8c498"/><stop offset="1" stop-color="#b06028"/></radialGradient></defs><rect x="3" y="1" width="13" height="11" rx="1" fill="#e2dccb"/><rect x="5" y="3" width="10" height="7" fill="url(#dscr)"/><path d="M8,12 H12 L13,15 H7Z" fill="#c8c2b2"/><path d="M0,16 V13 Q0,10 3.5,10 Q7.5,10 7.5,13 V16Z" fill="#88c8f0"/><ellipse cx="3.4" cy="6.8" rx="2.3" ry="3.4" fill="url(#dface)"/><path d="M1.1,6 Q1,3 3.5,3 Q5.8,3 5.8,5.5 L4.8,4.6 Q3,4 1.8,5.5Z" fill="#505050"/></svg>
<div class="t " style="left:300px;top:103px;font-size:12px;font-weight:bold;color:#fff;letter-spacing:-0.15px">Managed Bookmarks</div>
<div class="a" style="left:920px;top:102px;width:16px;height:14px;background:#d8d0ca"></div>
<div class="a" style="left:920px;top:102px;width:16px;height:1px;background:#fff"></div>
<div class="a" style="left:920px;top:102px;width:1px;height:14px;background:#fff"></div>
<div class="a" style="left:920px;top:115px;width:16px;height:1px;background:#404040"></div>
<div class="a" style="left:935px;top:102px;width:1px;height:14px;background:#404040"></div>
<div class="a" style="left:921px;top:114px;width:14px;height:1px;background:#808080"></div>
<div class="a" style="left:934px;top:103px;width:1px;height:12px;background:#808080"></div>
<svg class="a" style="left:0;top:0" width="980" height="860" shape-rendering="crispEdges"><rect x="925" y="112" width="6" height="2" fill="#fff"/><rect x="924" y="111" width="6" height="2" fill="#808080"/></svg>
<div class="a" style="left:936px;top:102px;width:16px;height:14px;background:#d8d0ca"></div>
<div class="a" style="left:936px;top:102px;width:16px;height:1px;background:#fff"></div>
<div class="a" style="left:936px;top:102px;width:1px;height:14px;background:#fff"></div>
<div class="a" style="left:936px;top:115px;width:16px;height:1px;background:#404040"></div>
<div class="a" style="left:951px;top:102px;width:1px;height:14px;background:#404040"></div>
<div class="a" style="left:937px;top:114px;width:14px;height:1px;background:#808080"></div>
<div class="a" style="left:950px;top:103px;width:1px;height:12px;background:#808080"></div>
<svg class="a" style="left:0;top:0" width="980" height="860" shape-rendering="crispEdges"><rect x="939" y="104" width="9" height="2" fill="#000"/><rect x="939" y="104" width="1" height="9" fill="#000"/><rect x="947" y="104" width="1" height="9" fill="#000"/><rect x="939" y="112" width="9" height="1" fill="#000"/></svg>
<div class="a" style="left:954px;top:102px;width:16px;height:14px;background:#d8d0ca"></div>
<div class="a" style="left:954px;top:102px;width:16px;height:1px;background:#fff"></div>
<div class="a" style="left:954px;top:102px;width:1px;height:14px;background:#fff"></div>
<div class="a" style="left:954px;top:115px;width:16px;height:1px;background:#404040"></div>
<div class="a" style="left:969px;top:102px;width:1px;height:14px;background:#404040"></div>
<div class="a" style="left:955px;top:114px;width:14px;height:1px;background:#808080"></div>
<div class="a" style="left:968px;top:103px;width:1px;height:12px;background:#808080"></div>
<svg class="a" style="left:0;top:0" width="980" height="860" shape-rendering="crispEdges"><rect x="958" y="105" width="1" height="1" fill="#000"/><rect x="959" y="105" width="1" height="1" fill="#000"/><rect x="964" y="105" width="1" height="1" fill="#000"/><rect x="965" y="105" width="1" height="1" fill="#000"/><rect x="959" y="106" width="1" height="1" fill="#000"/><rect x="960" y="106" width="1" height="1" fill="#000"/><rect x="963" y="106" width="1" height="1" fill="#000"/><rect x="964" y="106" width="1" height="1" fill="#000"/><rect x="960" y="107" width="1" height="1" fill="#000"/><rect x="961" y="107" width="1" height="1" fill="#000"/><rect x="962" y="107" width="1" height="1" fill="#000"/><rect x="963" y="107" width="1" height="1" fill="#000"/><rect x="961" y="108" width="1" height="1" fill="#000"/><rect x="962" y="108" width="1" height="1" fill="#000"/><rect x="960" y="109" width="1" height="1" fill="#000"/><rect x="961" y="109" width="1" height="1" fill="#000"/><rect x="962" y="109" width="1" height="1" fill="#000"/><rect x="963" y="109" width="1" height="1" fill="#000"/><rect x="959" y="110" width="1" height="1" fill="#000"/><rect x="960" y="110" width="1" height="1" fill="#000"/><rect x="963" y="110" width="1" height="1" fill="#000"/><rect x="964" y="110" width="1" height="1" fill="#000"/><rect x="958" y="111" width="1" height="1" fill="#000"/><rect x="959" y="111" width="1" height="1" fill="#000"/><rect x="964" y="111" width="1" height="1" fill="#000"/><rect x="965" y="111" width="1" height="1" fill="#000"/></svg>
<svg class="a" style="left:286px;top:133px" width="16" height="16" viewBox="0 0 16 16"><g shape-rendering="crispEdges"><rect x="0" y="5" width="15" height="11" fill="#4c4c4c"/><rect x="0" y="0" width="3" height="6" fill="#1e8a88"/><rect x="14" y="0" width="2" height="16" fill="#1e8a88"/><rect x="3" y="0" width="11" height="2" fill="#c8c4f0"/><rect x="2" y="2" width="12" height="1" fill="#6a68a8"/><rect x="3" y="3" width="6" height="2" fill="#20905a"/><rect x="9" y="3" width="5" height="2" fill="#f8c818"/><rect x="3" y="3" width="1" height="1" fill="#fff"/><rect x="11" y="5" width="1" height="1" fill="#000"/><rect x="9" y="6" width="5" height="8" fill="#fff4c8"/><rect x="10" y="8" width="3" height="1" fill="#7a78b0"/><rect x="10" y="10" width="3" height="1" fill="#7a78b0"/><rect x="9" y="14" width="5" height="1" fill="#f0d890"/></g><circle cx="5.5" cy="10.5" r="4.2" fill="#f4f4fa"/><path d="M5.5,10.5 L2,7 A4.2,4.2 0 0 1 5.5,6.3Z" fill="#c8f0c0"/><path d="M5.5,10.5 L1.5,11 A4.2,4.2 0 0 1 2,7Z" fill="#f8c8e0"/><path d="M5.5,10.5 L9.5,12 A4.2,4.2 0 0 1 7,14.5Z" fill="#c0d8f8"/><circle cx="5.5" cy="10.5" r="1.1" fill="#333"/></svg>
<div class="t s12" style="left:310px;top:132px;font-size:12px;color:#000;">Managed Bookmarks</div>
<div class="a" style="left:654px;top:133px;width:103px;height:28px;background:#d8d0ca"></div>
<div class="a" style="left:654px;top:133px;width:103px;height:1px;background:#fff"></div>
<div class="a" style="left:654px;top:133px;width:1px;height:28px;background:#fff"></div>
<div class="a" style="left:654px;top:160px;width:103px;height:1px;background:#404040"></div>
<div class="a" style="left:756px;top:133px;width:1px;height:28px;background:#404040"></div>
<div class="a" style="left:655px;top:159px;width:101px;height:1px;background:#808080"></div>
<div class="a" style="left:755px;top:134px;width:1px;height:26px;background:#808080"></div>
<div class="t" style="left:654px;top:140px;width:103px;text-align:center;font-size:12px;color:#000"><u>P</u>revious Setting</div>
<div class="a" style="left:763px;top:133px;width:103px;height:28px;background:#d8d0ca"></div>
<div class="a" style="left:763px;top:133px;width:103px;height:1px;background:#fff"></div>
<div class="a" style="left:763px;top:133px;width:1px;height:28px;background:#fff"></div>
<div class="a" style="left:763px;top:160px;width:103px;height:1px;background:#404040"></div>
<div class="a" style="left:865px;top:133px;width:1px;height:28px;background:#404040"></div>
<div class="a" style="left:764px;top:159px;width:101px;height:1px;background:#808080"></div>
<div class="a" style="left:864px;top:134px;width:1px;height:26px;background:#808080"></div>
<div class="t" style="left:763px;top:140px;width:103px;text-align:center;font-size:12px;color:#000"><u>N</u>ext Setting</div>
<svg class="a" style="left:289px;top:180px" width="12" height="12" viewBox="0 0 12 12"><g shape-rendering="crispEdges"><rect x="4" y="0" width="1" height="1" fill="#808080"/><rect x="5" y="0" width="1" height="1" fill="#808080"/><rect x="6" y="0" width="1" height="1" fill="#808080"/><rect x="7" y="0" width="1" height="1" fill="#808080"/><rect x="2" y="1" width="1" height="1" fill="#808080"/><rect x="3" y="1" width="1" height="1" fill="#808080"/><rect x="4" y="1" width="1" height="1" fill="#404040"/><rect x="5" y="1" width="1" height="1" fill="#404040"/><rect x="6" y="1" width="1" height="1" fill="#404040"/><rect x="7" y="1" width="1" height="1" fill="#404040"/><rect x="8" y="1" width="1" height="1" fill="#808080"/><rect x="9" y="1" width="1" height="1" fill="#808080"/><rect x="1" y="2" width="1" height="1" fill="#808080"/><rect x="2" y="2" width="1" height="1" fill="#404040"/><rect x="3" y="2" width="1" height="1" fill="#404040"/><rect x="4" y="2" width="1" height="1" fill="#fff"/><rect x="5" y="2" width="1" height="1" fill="#fff"/><rect x="6" y="2" width="1" height="1" fill="#fff"/><rect x="7" y="2" width="1" height="1" fill="#fff"/><rect x="8" y="2" width="1" height="1" fill="#404040"/><rect x="9" y="2" width="1" height="1" fill="#404040"/><rect x="10" y="2" width="1" height="1" fill="#fff"/><rect x="1" y="3" width="1" height="1" fill="#808080"/><rect x="2" y="3" width="1" height="1" fill="#404040"/><rect x="3" y="3" width="1" height="1" fill="#fff"/><rect x="4" y="3" width="1" height="1" fill="#fff"/><rect x="5" y="3" width="1" height="1" fill="#fff"/><rect x="6" y="3" width="1" height="1" fill="#fff"/><rect x="7" y="3" width="1" height="1" fill="#fff"/><rect x="8" y="3" width="1" height="1" fill="#fff"/><rect x="9" y="3" width="1" height="1" fill="#d8d0ca"/><rect x="10" y="3" width="1" height="1" fill="#fff"/><rect x="0" y="4" width="1" height="1" fill="#808080"/><rect x="1" y="4" width="1" height="1" fill="#404040"/><rect x="2" y="4" width="1" height="1" fill="#fff"/><rect x="3" y="4" width="1" height="1" fill="#fff"/><rect x="4" y="4" width="1" height="1" fill="#fff"/><rect x="5" y="4" width="1" height="1" fill="#fff"/><rect x="6" y="4" width="1" height="1" fill="#fff"/><rect x="7" y="4" width="1" height="1" fill="#fff"/><rect x="8" y="4" width="1" height="1" fill="#fff"/><rect x="9" y="4" width="1" height="1" fill="#fff"/><rect x="10" y="4" width="1" height="1" fill="#d8d0ca"/><rect x="11" y="4" width="1" height="1" fill="#fff"/><rect x="0" y="5" width="1" height="1" fill="#808080"/><rect x="1" y="5" width="1" height="1" fill="#404040"/><rect x="2" y="5" width="1" height="1" fill="#fff"/><rect x="3" y="5" width="1" height="1" fill="#fff"/><rect x="4" y="5" width="1" height="1" fill="#fff"/><rect x="5" y="5" width="1" height="1" fill="#fff"/><rect x="6" y="5" width="1" height="1" fill="#fff"/><rect x="7" y="5" width="1" height="1" fill="#fff"/><rect x="8" y="5" width="1" height="1" fill="#fff"/><rect x="9" y="5" width="1" height="1" fill="#fff"/><rect x="10" y="5" width="1" height="1" fill="#d8d0ca"/><rect x="11" y="5" width="1" height="1" fill="#fff"/><rect x="0" y="6" width="1" height="1" fill="#808080"/><rect x="1" y="6" width="1" height="1" fill="#404040"/><rect x="2" y="6" width="1" height="1" fill="#fff"/><rect x="3" y="6" width="1" height="1" fill="#fff"/><rect x="4" y="6" width="1" height="1" fill="#fff"/><rect x="5" y="6" width="1" height="1" fill="#fff"/><rect x="6" y="6" width="1" height="1" fill="#fff"/><rect x="7" y="6" width="1" height="1" fill="#fff"/><rect x="8" y="6" width="1" height="1" fill="#fff"/><rect x="9" y="6" width="1" height="1" fill="#fff"/><rect x="10" y="6" width="1" height="1" fill="#d8d0ca"/><rect x="11" y="6" width="1" height="1" fill="#fff"/><rect x="0" y="7" width="1" height="1" fill="#808080"/><rect x="1" y="7" width="1" height="1" fill="#404040"/><rect x="2" y="7" width="1" height="1" fill="#fff"/><rect x="3" y="7" width="1" height="1" fill="#fff"/><rect x="4" y="7" width="1" height="1" fill="#fff"/><rect x="5" y="7" width="1" height="1" fill="#fff"/><rect x="6" y="7" width="1" height="1" fill="#fff"/><rect x="7" y="7" width="1" height="1" fill="#fff"/><rect x="8" y="7" width="1" height="1" fill="#fff"/><rect x="9" y="7" width="1" height="1" fill="#fff"/><rect x="10" y="7" width="1" height="1" fill="#d8d0ca"/><rect x="11" y="7" width="1" height="1" fill="#fff"/><rect x="1" y="8" width="1" height="1" fill="#808080"/><rect x="2" y="8" width="1" height="1" fill="#404040"/><rect x="3" y="8" width="1" height="1" fill="#fff"/><rect x="4" y="8" width="1" height="1" fill="#fff"/><rect x="5" y="8" width="1" height="1" fill="#fff"/><rect x="6" y="8" width="1" height="1" fill="#fff"/><rect x="7" y="8" width="1" height="1" fill="#fff"/><rect x="8" y="8" width="1" height="1" fill="#fff"/><rect x="9" y="8" width="1" height="1" fill="#d8d0ca"/><rect x="10" y="8" width="1" height="1" fill="#fff"/><rect x="1" y="9" width="1" height="1" fill="#fff"/><rect x="2" y="9" width="1" height="1" fill="#d8d0ca"/><rect x="3" y="9" width="1" height="1" fill="#d8d0ca"/><rect x="4" y="9" width="1" height="1" fill="#fff"/><rect x="5" y="9" width="1" height="1" fill="#fff"/><rect x="6" y="9" width="1" height="1" fill="#fff"/><rect x="7" y="9" width="1" height="1" fill="#fff"/><rect x="8" y="9" width="1" height="1" fill="#d8d0ca"/><rect x="9" y="9" width="1" height="1" fill="#d8d0ca"/><rect x="10" y="9" width="1" height="1" fill="#fff"/><rect x="2" y="10" width="1" height="1" fill="#fff"/><rect x="3" y="10" width="1" height="1" fill="#fff"/><rect x="4" y="10" width="1" height="1" fill="#d8d0ca"/><rect x="5" y="10" width="1" height="1" fill="#d8d0ca"/><rect x="6" y="10" width="1" height="1" fill="#d8d0ca"/><rect x="7" y="10" width="1" height="1" fill="#d8d0ca"/><rect x="8" y="10" width="1" height="1" fill="#fff"/><rect x="9" y="10" width="1" height="1" fill="#fff"/><rect x="4" y="11" width="1" height="1" fill="#fff"/><rect x="5" y="11" width="1" height="1" fill="#fff"/><rect x="6" y="11" width="1" height="1" fill="#fff"/><rect x="7" y="11" width="1" height="1" fill="#fff"/></g></svg>
<svg class="a" style="left:289px;top:208px" width="12" height="12" viewBox="0 0 12 12"><g shape-rendering="crispEdges"><rect x="4" y="0" width="1" height="1" fill="#808080"/><rect x="5" y="0" width="1" height="1" fill="#808080"/><rect x="6" y="0" width="1" height="1" fill="#808080"/><rect x="7" y="0" width="1" height="1" fill="#808080"/><rect x="2" y="1" width="1" height="1" fill="#808080"/><rect x="3" y="1" width="1" height="1" fill="#808080"/><rect x="4" y="1" width="1" height="1" fill="#404040"/><rect x="5" y="1" width="1" height="1" fill="#404040"/><rect x="6" y="1" width="1" height="1" fill="#404040"/><rect x="7" y="1" width="1" height="1" fill="#404040"/><rect x="8" y="1" width="1" height="1" fill="#808080"/><rect x="9" y="1" width="1" height="1" fill="#808080"/><rect x="1" y="2" width="1" height="1" fill="#808080"/><rect x="2" y="2" width="1" height="1" fill="#404040"/><rect x="3" y="2" width="1" height="1" fill="#404040"/><rect x="4" y="2" width="1" height="1" fill="#fff"/><rect x="5" y="2" width="1" height="1" fill="#fff"/><rect x="6" y="2" width="1" height="1" fill="#fff"/><rect x="7" y="2" width="1" height="1" fill="#fff"/><rect x="8" y="2" width="1" height="1" fill="#404040"/><rect x="9" y="2" width="1" height="1" fill="#404040"/><rect x="10" y="2" width="1" height="1" fill="#fff"/><rect x="1" y="3" width="1" height="1" fill="#808080"/><rect x="2" y="3" width="1" height="1" fill="#404040"/><rect x="3" y="3" width="1" height="1" fill="#fff"/><rect x="4" y="3" width="1" height="1" fill="#fff"/><rect x="5" y="3" width="1" height="1" fill="#fff"/><rect x="6" y="3" width="1" height="1" fill="#fff"/><rect x="7" y="3" width="1" height="1" fill="#fff"/><rect x="8" y="3" width="1" height="1" fill="#fff"/><rect x="9" y="3" width="1" height="1" fill="#d8d0ca"/><rect x="10" y="3" width="1" height="1" fill="#fff"/><rect x="0" y="4" width="1" height="1" fill="#808080"/><rect x="1" y="4" width="1" height="1" fill="#404040"/><rect x="2" y="4" width="1" height="1" fill="#fff"/><rect x="3" y="4" width="1" height="1" fill="#fff"/><rect x="4" y="4" width="1" height="1" fill="#fff"/><rect x="5" y="4" width="1" height="1" fill="#000"/><rect x="6" y="4" width="1" height="1" fill="#000"/><rect x="7" y="4" width="1" height="1" fill="#fff"/><rect x="8" y="4" width="1" height="1" fill="#fff"/><rect x="9" y="4" width="1" height="1" fill="#fff"/><rect x="10" y="4" width="1" height="1" fill="#d8d0ca"/><rect x="11" y="4" width="1" height="1" fill="#fff"/><rect x="0" y="5" width="1" height="1" fill="#808080"/><rect x="1" y="5" width="1" height="1" fill="#404040"/><rect x="2" y="5" width="1" height="1" fill="#fff"/><rect x="3" y="5" width="1" height="1" fill="#fff"/><rect x="4" y="5" width="1" height="1" fill="#000"/><rect x="5" y="5" width="1" height="1" fill="#000"/><rect x="6" y="5" width="1" height="1" fill="#000"/><rect x="7" y="5" width="1" height="1" fill="#000"/><rect x="8" y="5" width="1" height="1" fill="#fff"/><rect x="9" y="5" width="1" height="1" fill="#fff"/><rect x="10" y="5" width="1" height="1" fill="#d8d0ca"/><rect x="11" y="5" width="1" height="1" fill="#fff"/><rect x="0" y="6" width="1" height="1" fill="#808080"/><rect x="1" y="6" width="1" height="1" fill="#404040"/><rect x="2" y="6" width="1" height="1" fill="#fff"/><rect x="3" y="6" width="1" height="1" fill="#fff"/><rect x="4" y="6" width="1" height="1" fill="#000"/><rect x="5" y="6" width="1" height="1" fill="#000"/><rect x="6" y="6" width="1" height="1" fill="#000"/><rect x="7" y="6" width="1" height="1" fill="#000"/><rect x="8" y="6" width="1" height="1" fill="#fff"/><rect x="9" y="6" width="1" height="1" fill="#fff"/><rect x="10" y="6" width="1" height="1" fill="#d8d0ca"/><rect x="11" y="6" width="1" height="1" fill="#fff"/><rect x="0" y="7" width="1" height="1" fill="#808080"/><rect x="1" y="7" width="1" height="1" fill="#404040"/><rect x="2" y="7" width="1" height="1" fill="#fff"/><rect x="3" y="7" width="1" height="1" fill="#fff"/><rect x="4" y="7" width="1" height="1" fill="#fff"/><rect x="5" y="7" width="1" height="1" fill="#000"/><rect x="6" y="7" width="1" height="1" fill="#000"/><rect x="7" y="7" width="1" height="1" fill="#fff"/><rect x="8" y="7" width="1" height="1" fill="#fff"/><rect x="9" y="7" width="1" height="1" fill="#fff"/><rect x="10" y="7" width="1" height="1" fill="#d8d0ca"/><rect x="11" y="7" width="1" height="1" fill="#fff"/><rect x="1" y="8" width="1" height="1" fill="#808080"/><rect x="2" y="8" width="1" height="1" fill="#404040"/><rect x="3" y="8" width="1" height="1" fill="#fff"/><rect x="4" y="8" width="1" height="1" fill="#fff"/><rect x="5" y="8" width="1" height="1" fill="#fff"/><rect x="6" y="8" width="1" height="1" fill="#fff"/><rect x="7" y="8" width="1" height="1" fill="#fff"/><rect x="8" y="8" width="1" height="1" fill="#fff"/><rect x="9" y="8" width="1" height="1" fill="#d8d0ca"/><rect x="10" y="8" width="1" height="1" fill="#fff"/><rect x="1" y="9" width="1" height="1" fill="#fff"/><rect x="2" y="9" width="1" height="1" fill="#d8d0ca"/><rect x="3" y="9" width="1" height="1" fill="#d8d0ca"/><rect x="4" y="9" width="1" height="1" fill="#fff"/><rect x="5" y="9" width="1" height="1" fill="#fff"/><rect x="6" y="9" width="1" height="1" fill="#fff"/><rect x="7" y="9" width="1" height="1" fill="#fff"/><rect x="8" y="9" width="1" height="1" fill="#d8d0ca"/><rect x="9" y="9" width="1" height="1" fill="#d8d0ca"/><rect x="10" y="9" width="1" height="1" fill="#fff"/><rect x="2" y="10" width="1" height="1" fill="#fff"/><rect x="3" y="10" width="1" height="1" fill="#fff"/><rect x="4" y="10" width="1" height="1" fill="#d8d0ca"/><rect x="5" y="10" width="1" height="1" fill="#d8d0ca"/><rect x="6" y="10" width="1" height="1" fill="#d8d0ca"/><rect x="7" y="10" width="1" height="1" fill="#d8d0ca"/><rect x="8" y="10" width="1" height="1" fill="#fff"/><rect x="9" y="10" width="1" height="1" fill="#fff"/><rect x="4" y="11" width="1" height="1" fill="#fff"/><rect x="5" y="11" width="1" height="1" fill="#fff"/><rect x="6" y="11" width="1" height="1" fill="#fff"/><rect x="7" y="11" width="1" height="1" fill="#fff"/></g></svg>
<svg class="a" style="left:289px;top:236px" width="12" height="12" viewBox="0 0 12 12"><g shape-rendering="crispEdges"><rect x="4" y="0" width="1" height="1" fill="#808080"/><rect x="5" y="0" width="1" height="1" fill="#808080"/><rect x="6" y="0" width="1" height="1" fill="#808080"/><rect x="7" y="0" width="1" height="1" fill="#808080"/><rect x="2" y="1" width="1" height="1" fill="#808080"/><rect x="3" y="1" width="1" height="1" fill="#808080"/><rect x="4" y="1" width="1" height="1" fill="#404040"/><rect x="5" y="1" width="1" height="1" fill="#404040"/><rect x="6" y="1" width="1" height="1" fill="#404040"/><rect x="7" y="1" width="1" height="1" fill="#404040"/><rect x="8" y="1" width="1" height="1" fill="#808080"/><rect x="9" y="1" width="1" height="1" fill="#808080"/><rect x="1" y="2" width="1" height="1" fill="#808080"/><rect x="2" y="2" width="1" height="1" fill="#404040"/><rect x="3" y="2" width="1" height="1" fill="#404040"/><rect x="4" y="2" width="1" height="1" fill="#fff"/><rect x="5" y="2" width="1" height="1" fill="#fff"/><rect x="6" y="2" width="1" height="1" fill="#fff"/><rect x="7" y="2" width="1" height="1" fill="#fff"/><rect x="8" y="2" width="1" height="1" fill="#404040"/><rect x="9" y="2" width="1" height="1" fill="#404040"/><rect x="10" y="2" width="1" height="1" fill="#fff"/><rect x="1" y="3" width="1" height="1" fill="#808080"/><rect x="2" y="3" width="1" height="1" fill="#404040"/><rect x="3" y="3" width="1" height="1" fill="#fff"/><rect x="4" y="3" width="1" height="1" fill="#fff"/><rect x="5" y="3" width="1" height="1" fill="#fff"/><rect x="6" y="3" width="1" height="1" fill="#fff"/><rect x="7" y="3" width="1" height="1" fill="#fff"/><rect x="8" y="3" width="1" height="1" fill="#fff"/><rect x="9" y="3" width="1" height="1" fill="#d8d0ca"/><rect x="10" y="3" width="1" height="1" fill="#fff"/><rect x="0" y="4" width="1" height="1" fill="#808080"/><rect x="1" y="4" width="1" height="1" fill="#404040"/><rect x="2" y="4" width="1" height="1" fill="#fff"/><rect x="3" y="4" width="1" height="1" fill="#fff"/><rect x="4" y="4" width="1" height="1" fill="#fff"/><rect x="5" y="4" width="1" height="1" fill="#fff"/><rect x="6" y="4" width="1" height="1" fill="#fff"/><rect x="7" y="4" width="1" height="1" fill="#fff"/><rect x="8" y="4" width="1" height="1" fill="#fff"/><rect x="9" y="4" width="1" height="1" fill="#fff"/><rect x="10" y="4" width="1" height="1" fill="#d8d0ca"/><rect x="11" y="4" width="1" height="1" fill="#fff"/><rect x="0" y="5" width="1" height="1" fill="#808080"/><rect x="1" y="5" width="1" height="1" fill="#404040"/><rect x="2" y="5" width="1" height="1" fill="#fff"/><rect x="3" y="5" width="1" height="1" fill="#fff"/><rect x="4" y="5" width="1" height="1" fill="#fff"/><rect x="5" y="5" width="1" height="1" fill="#fff"/><rect x="6" y="5" width="1" height="1" fill="#fff"/><rect x="7" y="5" width="1" height="1" fill="#fff"/><rect x="8" y="5" width="1" height="1" fill="#fff"/><rect x="9" y="5" width="1" height="1" fill="#fff"/><rect x="10" y="5" width="1" height="1" fill="#d8d0ca"/><rect x="11" y="5" width="1" height="1" fill="#fff"/><rect x="0" y="6" width="1" height="1" fill="#808080"/><rect x="1" y="6" width="1" height="1" fill="#404040"/><rect x="2" y="6" width="1" height="1" fill="#fff"/><rect x="3" y="6" width="1" height="1" fill="#fff"/><rect x="4" y="6" width="1" height="1" fill="#fff"/><rect x="5" y="6" width="1" height="1" fill="#fff"/><rect x="6" y="6" width="1" height="1" fill="#fff"/><rect x="7" y="6" width="1" height="1" fill="#fff"/><rect x="8" y="6" width="1" height="1" fill="#fff"/><rect x="9" y="6" width="1" height="1" fill="#fff"/><rect x="10" y="6" width="1" height="1" fill="#d8d0ca"/><rect x="11" y="6" width="1" height="1" fill="#fff"/><rect x="0" y="7" width="1" height="1" fill="#808080"/><rect x="1" y="7" width="1" height="1" fill="#404040"/><rect x="2" y="7" width="1" height="1" fill="#fff"/><rect x="3" y="7" width="1" height="1" fill="#fff"/><rect x="4" y="7" width="1" height="1" fill="#fff"/><rect x="5" y="7" width="1" height="1" fill="#fff"/><rect x="6" y="7" width="1" height="1" fill="#fff"/><rect x="7" y="7" width="1" height="1" fill="#fff"/><rect x="8" y="7" width="1" height="1" fill="#fff"/><rect x="9" y="7" width="1" height="1" fill="#fff"/><rect x="10" y="7" width="1" height="1" fill="#d8d0ca"/><rect x="11" y="7" width="1" height="1" fill="#fff"/><rect x="1" y="8" width="1" height="1" fill="#808080"/><rect x="2" y="8" width="1" height="1" fill="#404040"/><rect x="3" y="8" width="1" height="1" fill="#fff"/><rect x="4" y="8" width="1" height="1" fill="#fff"/><rect x="5" y="8" width="1" height="1" fill="#fff"/><rect x="6" y="8" width="1" height="1" fill="#fff"/><rect x="7" y="8" width="1" height="1" fill="#fff"/><rect x="8" y="8" width="1" height="1" fill="#fff"/><rect x="9" y="8" width="1" height="1" fill="#d8d0ca"/><rect x="10" y="8" width="1" height="1" fill="#fff"/><rect x="1" y="9" width="1" height="1" fill="#fff"/><rect x="2" y="9" width="1" height="1" fill="#d8d0ca"/><rect x="3" y="9" width="1" height="1" fill="#d8d0ca"/><rect x="4" y="9" width="1" height="1" fill="#fff"/><rect x="5" y="9" width="1" height="1" fill="#fff"/><rect x="6" y="9" width="1" height="1" fill="#fff"/><rect x="7" y="9" width="1" height="1" fill="#fff"/><rect x="8" y="9" width="1" height="1" fill="#d8d0ca"/><rect x="9" y="9" width="1" height="1" fill="#d8d0ca"/><rect x="10" y="9" width="1" height="1" fill="#fff"/><rect x="2" y="10" width="1" height="1" fill="#fff"/><rect x="3" y="10" width="1" height="1" fill="#fff"/><rect x="4" y="10" width="1" height="1" fill="#d8d0ca"/><rect x="5" y="10" width="1" height="1" fill="#d8d0ca"/><rect x="6" y="10" width="1" height="1" fill="#d8d0ca"/><rect x="7" y="10" width="1" height="1" fill="#d8d0ca"/><rect x="8" y="10" width="1" height="1" fill="#fff"/><rect x="9" y="10" width="1" height="1" fill="#fff"/><rect x="4" y="11" width="1" height="1" fill="#fff"/><rect x="5" y="11" width="1" height="1" fill="#fff"/><rect x="6" y="11" width="1" height="1" fill="#fff"/><rect x="7" y="11" width="1" height="1" fill="#fff"/></g></svg>
<div class="t s12" style="left:306px;top:180px;font-size:12px;color:#000;">Not <u>C</u>onfigured</div>
<div class="t s12" style="left:306px;top:208px;font-size:12px;color:#000;"><u>E</u>nabled</div>
<div class="t s12" style="left:306px;top:236px;font-size:12px;color:#000;"><u>D</u>isabled</div>
<div class="t s12" style="left:411px;top:175px;font-size:12px;color:#000;">Comment:</div>
<div class="t s12" style="left:411px;top:253px;font-size:12px;color:#000;">Supported on:</div>
<div class="a" style="left:497px;top:176px;width:466px;height:72px;background:#d8d0ca"></div>
<div class="a" style="left:497px;top:176px;width:466px;height:1px;background:#808080"></div>
<div class="a" style="left:497px;top:176px;width:1px;height:72px;background:#808080"></div>
<div class="a" style="left:497px;top:247px;width:466px;height:1px;background:#fff"></div>
<div class="a" style="left:962px;top:176px;width:1px;height:72px;background:#fff"></div>
<div class="a" style="left:498px;top:177px;width:464px;height:1px;background:#404040"></div>
<div class="a" style="left:498px;top:177px;width:1px;height:70px;background:#404040"></div>
<div class="a" style="left:498px;top:246px;width:464px;height:1px;background:#d8d0ca"></div>
<div class="a" style="left:961px;top:177px;width:1px;height:70px;background:#d8d0ca"></div>
<div class="a" style="left:945px;top:178px;width:16px;height:16px;background:#d8d0ca"></div>
<div class="a" style="left:945px;top:178px;width:16px;height:1px;background:#d8d0ca"></div>
<div class="a" style="left:945px;top:178px;width:1px;height:16px;background:#d8d0ca"></div>
<div class="a" style="left:945px;top:193px;width:16px;height:1px;background:#404040"></div>
<div class="a" style="left:960px;top:178px;width:1px;height:16px;background:#404040"></div>
<div class="a" style="left:946px;top:179px;width:14px;height:1px;background:#fff"></div>
<div class="a" style="left:946px;top:179px;width:1px;height:14px;background:#fff"></div>
<div class="a" style="left:946px;top:192px;width:14px;height:1px;background:#808080"></div>
<div class="a" style="left:959px;top:179px;width:1px;height:14px;background:#808080"></div>
<svg class="a" style="left:0;top:0" width="980" height="860" shape-rendering="crispEdges"><rect x="953" y="185" width="1" height="1" fill="#fff"/><rect x="952" y="186" width="3" height="1" fill="#fff"/><rect x="951" y="187" width="5" height="1" fill="#fff"/><rect x="950" y="188" width="7" height="1" fill="#fff"/><rect x="952" y="184" width="1" height="1" fill="#808080"/><rect x="951" y="185" width="3" height="1" fill="#808080"/><rect x="950" y="186" width="5" height="1" fill="#808080"/><rect x="949" y="187" width="7" height="1" fill="#808080"/></svg>
<svg class="a" style="left:945px;top:194px" width="16" height="36"><rect width="16" height="36" fill="url(#dith)"/></svg>
<div class="a" style="left:945px;top:230px;width:16px;height:16px;background:#d8d0ca"></div>
<div class="a" style="left:945px;top:230px;width:16px;height:1px;background:#d8d0ca"></div>
<div class="a" style="left:945px;top:230px;width:1px;height:16px;background:#d8d0ca"></div>
<div class="a" style="left:945px;top:245px;width:16px;height:1px;background:#404040"></div>
<div class="a" style="left:960px;top:230px;width:1px;height:16px;background:#404040"></div>
<div class="a" style="left:946px;top:231px;width:14px;height:1px;background:#fff"></div>
<div class="a" style="left:946px;top:231px;width:1px;height:14px;background:#fff"></div>
<div class="a" style="left:946px;top:244px;width:14px;height:1px;background:#808080"></div>
<div class="a" style="left:959px;top:231px;width:1px;height:14px;background:#808080"></div>
<svg class="a" style="left:0;top:0" width="980" height="860" shape-rendering="crispEdges"><rect x="953" y="240" width="1" height="1" fill="#fff"/><rect x="952" y="239" width="3" height="1" fill="#fff"/><rect x="951" y="238" width="5" height="1" fill="#fff"/><rect x="950" y="237" width="7" height="1" fill="#fff"/><rect x="952" y="239" width="1" height="1" fill="#808080"/><rect x="951" y="238" width="3" height="1" fill="#808080"/><rect x="950" y="237" width="5" height="1" fill="#808080"/><rect x="949" y="236" width="7" height="1" fill="#808080"/></svg>
<div class="a" style="left:497px;top:254px;width:466px;height:46px;background:#d8d0ca"></div>
<div class="a" style="left:497px;top:254px;width:466px;height:1px;background:#808080"></div>
<div class="a" style="left:497px;top:254px;width:1px;height:46px;background:#808080"></div>
<div class="a" style="left:497px;top:299px;width:466px;height:1px;background:#fff"></div>
<div class="a" style="left:962px;top:254px;width:1px;height:46px;background:#fff"></div>
<div class="a" style="left:498px;top:255px;width:464px;height:1px;background:#404040"></div>
<div class="a" style="left:498px;top:255px;width:1px;height:44px;background:#404040"></div>
<div class="a" style="left:498px;top:298px;width:464px;height:1px;background:#d8d0ca"></div>
<div class="a" style="left:961px;top:255px;width:1px;height:44px;background:#d8d0ca"></div>
<div class="a" style="left:945px;top:256px;width:16px;height:16px;background:#d8d0ca"></div>
<div class="a" style="left:945px;top:256px;width:16px;height:1px;background:#d8d0ca"></div>
<div class="a" style="left:945px;top:256px;width:1px;height:16px;background:#d8d0ca"></div>
<div class="a" style="left:945px;top:271px;width:16px;height:1px;background:#404040"></div>
<div class="a" style="left:960px;top:256px;width:1px;height:16px;background:#404040"></div>
<div class="a" style="left:946px;top:257px;width:14px;height:1px;background:#fff"></div>
<div class="a" style="left:946px;top:257px;width:1px;height:14px;background:#fff"></div>
<div class="a" style="left:946px;top:270px;width:14px;height:1px;background:#808080"></div>
<div class="a" style="left:959px;top:257px;width:1px;height:14px;background:#808080"></div>
<svg class="a" style="left:0;top:0" width="980" height="860" shape-rendering="crispEdges"><rect x="953" y="263" width="1" height="1" fill="#fff"/><rect x="952" y="264" width="3" height="1" fill="#fff"/><rect x="951" y="265" width="5" height="1" fill="#fff"/><rect x="950" y="266" width="7" height="1" fill="#fff"/><rect x="952" y="262" width="1" height="1" fill="#808080"/><rect x="951" y="263" width="3" height="1" fill="#808080"/><rect x="950" y="264" width="5" height="1" fill="#808080"/><rect x="949" y="265" width="7" height="1" fill="#808080"/></svg>
<svg class="a" style="left:945px;top:272px" width="16" height="10"><rect width="16" height="10" fill="url(#dith)"/></svg>
<div class="a" style="left:945px;top:282px;width:16px;height:16px;background:#d8d0ca"></div>
<div class="a" style="left:945px;top:282px;width:16px;height:1px;background:#d8d0ca"></div>
<div class="a" style="left:945px;top:282px;width:1px;height:16px;background:#d8d0ca"></div>
<div class="a" style="left:945px;top:297px;width:16px;height:1px;background:#404040"></div>
<div class="a" style="left:960px;top:282px;width:1px;height:16px;background:#404040"></div>
<div class="a" style="left:946px;top:283px;width:14px;height:1px;background:#fff"></div>
<div class="a" style="left:946px;top:283px;width:1px;height:14px;background:#fff"></div>
<div class="a" style="left:946px;top:296px;width:14px;height:1px;background:#808080"></div>
<div class="a" style="left:959px;top:283px;width:1px;height:14px;background:#808080"></div>
<svg class="a" style="left:0;top:0" width="980" height="860" shape-rendering="crispEdges"><rect x="953" y="292" width="1" height="1" fill="#fff"/><rect x="952" y="291" width="3" height="1" fill="#fff"/><rect x="951" y="290" width="5" height="1" fill="#fff"/><rect x="950" y="289" width="7" height="1" fill="#fff"/><rect x="952" y="291" width="1" height="1" fill="#808080"/><rect x="951" y="290" width="3" height="1" fill="#808080"/><rect x="950" y="289" width="5" height="1" fill="#808080"/><rect x="949" y="288" width="7" height="1" fill="#808080"/></svg>
<div class="t s12" style="left:503px;top:258px;font-size:12px;color:#000;">Microsoft Windows XP SP2 or later</div>
<div class="t s12" style="left:285px;top:314px;font-size:12px;color:#000;">Options:</div>
<div class="t s12" style="left:595px;top:314px;font-size:12px;color:#000;">Help:</div>
<div class="a" style="left:283px;top:349px;width:301px;height:332px;background:#000"></div>
<div class="a" style="left:284px;top:350px;width:299px;height:330px;background:#fff"></div>
<div class="t s12" style="left:289px;top:357px;font-size:12px;color:#000;">Managed Bookmarks</div>
<div class="a" style="left:287px;top:379px;width:220px;height:23px;background:#fff"></div>
<div class="a" style="left:287px;top:379px;width:220px;height:1px;background:#808080"></div>
<div class="a" style="left:287px;top:379px;width:1px;height:23px;background:#808080"></div>
<div class="a" style="left:287px;top:401px;width:220px;height:1px;background:#fff"></div>
<div class="a" style="left:506px;top:379px;width:1px;height:23px;background:#fff"></div>
<div class="a" style="left:288px;top:380px;width:218px;height:1px;background:#404040"></div>
<div class="a" style="left:288px;top:380px;width:1px;height:21px;background:#404040"></div>
<div class="a" style="left:288px;top:400px;width:218px;height:1px;background:#d8d0ca"></div>
<div class="a" style="left:505px;top:380px;width:1px;height:21px;background:#d8d0ca"></div>
<div class="a" style="left:592px;top:349px;width:359px;height:332px;background:#000"></div>
<div class="a" style="left:593px;top:350px;width:357px;height:330px;background:#fff"></div>
<div class="a" style="left:951px;top:349px;width:16px;height:16px;background:#d8d0ca"></div>
<div class="a" style="left:951px;top:349px;width:16px;height:1px;background:#d8d0ca"></div>
<div class="a" style="left:951px;top:349px;width:1px;height:16px;background:#d8d0ca"></div>
<div class="a" style="left:951px;top:364px;width:16px;height:1px;background:#404040"></div>
<div class="a" style="left:966px;top:349px;width:1px;height:16px;background:#404040"></div>
<div class="a" style="left:952px;top:350px;width:14px;height:1px;background:#fff"></div>
<div class="a" style="left:952px;top:350px;width:1px;height:14px;background:#fff"></div>
<div class="a" style="left:952px;top:363px;width:14px;height:1px;background:#808080"></div>
<div class="a" style="left:965px;top:350px;width:1px;height:14px;background:#808080"></div>
<svg class="a" style="left:0;top:0" width="980" height="860" shape-rendering="crispEdges"><rect x="959" y="356" width="1" height="1" fill="#fff"/><rect x="958" y="357" width="3" height="1" fill="#fff"/><rect x="957" y="358" width="5" height="1" fill="#fff"/><rect x="956" y="359" width="7" height="1" fill="#fff"/><rect x="958" y="355" width="1" height="1" fill="#808080"/><rect x="957" y="356" width="3" height="1" fill="#808080"/><rect x="956" y="357" width="5" height="1" fill="#808080"/><rect x="955" y="358" width="7" height="1" fill="#808080"/></svg>
<svg class="a" style="left:951px;top:365px" width="16" height="300"><rect width="16" height="300" fill="url(#dith)"/></svg>
<div class="a" style="left:951px;top:665px;width:16px;height:16px;background:#d8d0ca"></div>
<div class="a" style="left:951px;top:665px;width:16px;height:1px;background:#d8d0ca"></div>
<div class="a" style="left:951px;top:665px;width:1px;height:16px;background:#d8d0ca"></div>
<div class="a" style="left:951px;top:680px;width:16px;height:1px;background:#404040"></div>
<div class="a" style="left:966px;top:665px;width:1px;height:16px;background:#404040"></div>
<div class="a" style="left:952px;top:666px;width:14px;height:1px;background:#fff"></div>
<div class="a" style="left:952px;top:666px;width:1px;height:14px;background:#fff"></div>
<div class="a" style="left:952px;top:679px;width:14px;height:1px;background:#808080"></div>
<div class="a" style="left:965px;top:666px;width:1px;height:14px;background:#808080"></div>
<svg class="a" style="left:0;top:0" width="980" height="860" shape-rendering="crispEdges"><rect x="959" y="675" width="1" height="1" fill="#fff"/><rect x="958" y="674" width="3" height="1" fill="#fff"/><rect x="957" y="673" width="5" height="1" fill="#fff"/><rect x="956" y="672" width="7" height="1" fill="#fff"/><rect x="958" y="674" width="1" height="1" fill="#808080"/><rect x="957" y="673" width="3" height="1" fill="#808080"/><rect x="956" y="672" width="5" height="1" fill="#808080"/><rect x="955" y="671" width="7" height="1" fill="#808080"/></svg>
<div class="t s12" style="left:597px;top:352px;font-size:12px;color:#000;">Configures a list of managed bookmarks.</div>
<div class="t s12" style="left:597px;top:382px;font-size:12px;color:#000;">The policy is a list of bookmarks, and each bookmark is a</div>
<div class="t s12" style="left:597px;top:397px;font-size:12px;color:#000;">dictionary containing the bookmark "name" and target "url".</div>
<div class="t s12" style="left:597px;top:427px;font-size:12px;color:#000;">These bookmarks are placed in a Managed bookmarks folder</div>
<div class="t s12" style="left:597px;top:442px;font-size:12px;color:#000;">inside the Mobile bookmarks. These bookmarks can't be modified</div>
<div class="t s12" style="left:597px;top:457px;font-size:12px;color:#000;">by the user.</div>
<div class="t s12" style="left:597px;top:487px;font-size:12px;color:#000;">When this policy is set then the Managed bookmarks are the</div>
<div class="t s12" style="left:597px;top:502px;font-size:12px;color:#000;">default folder opened when the bookmarks view is opened in</div>
<div class="t s12" style="left:597px;top:517px;font-size:12px;color:#000;">Google Chrome.</div>
<div class="t s12" style="left:597px;top:547px;font-size:12px;color:#000;">Managed bookmarks are not synced to the user account.</div>
<div class="a" style="left:726px;top:695px;width:75px;height:28px;background:#000"></div>
<div class="a" style="left:727px;top:696px;width:73px;height:26px;background:#d8d0ca"></div>
<div class="a" style="left:727px;top:696px;width:73px;height:1px;background:#fff"></div>
<div class="a" style="left:727px;top:696px;width:1px;height:26px;background:#fff"></div>
<div class="a" style="left:727px;top:721px;width:73px;height:1px;background:#404040"></div>
<div class="a" style="left:799px;top:696px;width:1px;height:26px;background:#404040"></div>
<div class="a" style="left:728px;top:720px;width:71px;height:1px;background:#808080"></div>
<div class="a" style="left:798px;top:697px;width:1px;height:24px;background:#808080"></div>
<div class="t" style="left:726px;top:702px;width:75px;text-align:center;font-size:12px;color:#000">OK</div>
<div class="a" style="left:807px;top:695px;width:75px;height:28px;background:#d8d0ca"></div>
<div class="a" style="left:807px;top:695px;width:75px;height:1px;background:#fff"></div>
<div class="a" style="left:807px;top:695px;width:1px;height:28px;background:#fff"></div>
<div class="a" style="left:807px;top:722px;width:75px;height:1px;background:#404040"></div>
<div class="a" style="left:881px;top:695px;width:1px;height:28px;background:#404040"></div>
<div class="a" style="left:808px;top:721px;width:73px;height:1px;background:#808080"></div>
<div class="a" style="left:880px;top:696px;width:1px;height:26px;background:#808080"></div>
<div class="t" style="left:807px;top:702px;width:75px;text-align:center;font-size:12px;color:#000">Cancel</div>
<div class="a" style="left:888px;top:695px;width:75px;height:28px;background:#d8d0ca"></div>
<div class="a" style="left:888px;top:695px;width:75px;height:1px;background:#fff"></div>
<div class="a" style="left:888px;top:695px;width:1px;height:28px;background:#fff"></div>
<div class="a" style="left:888px;top:722px;width:75px;height:1px;background:#404040"></div>
<div class="a" style="left:962px;top:695px;width:1px;height:28px;background:#404040"></div>
<div class="a" style="left:889px;top:721px;width:73px;height:1px;background:#808080"></div>
<div class="a" style="left:961px;top:696px;width:1px;height:26px;background:#808080"></div>
<div class="t" style="left:889px;top:703px;width:75px;text-align:center;font-size:12px;color:#fff"><u>A</u>pply</div>
<div class="t" style="left:888px;top:702px;width:75px;text-align:center;font-size:12px;color:#808080"><u>A</u>pply</div>
</body></html>
